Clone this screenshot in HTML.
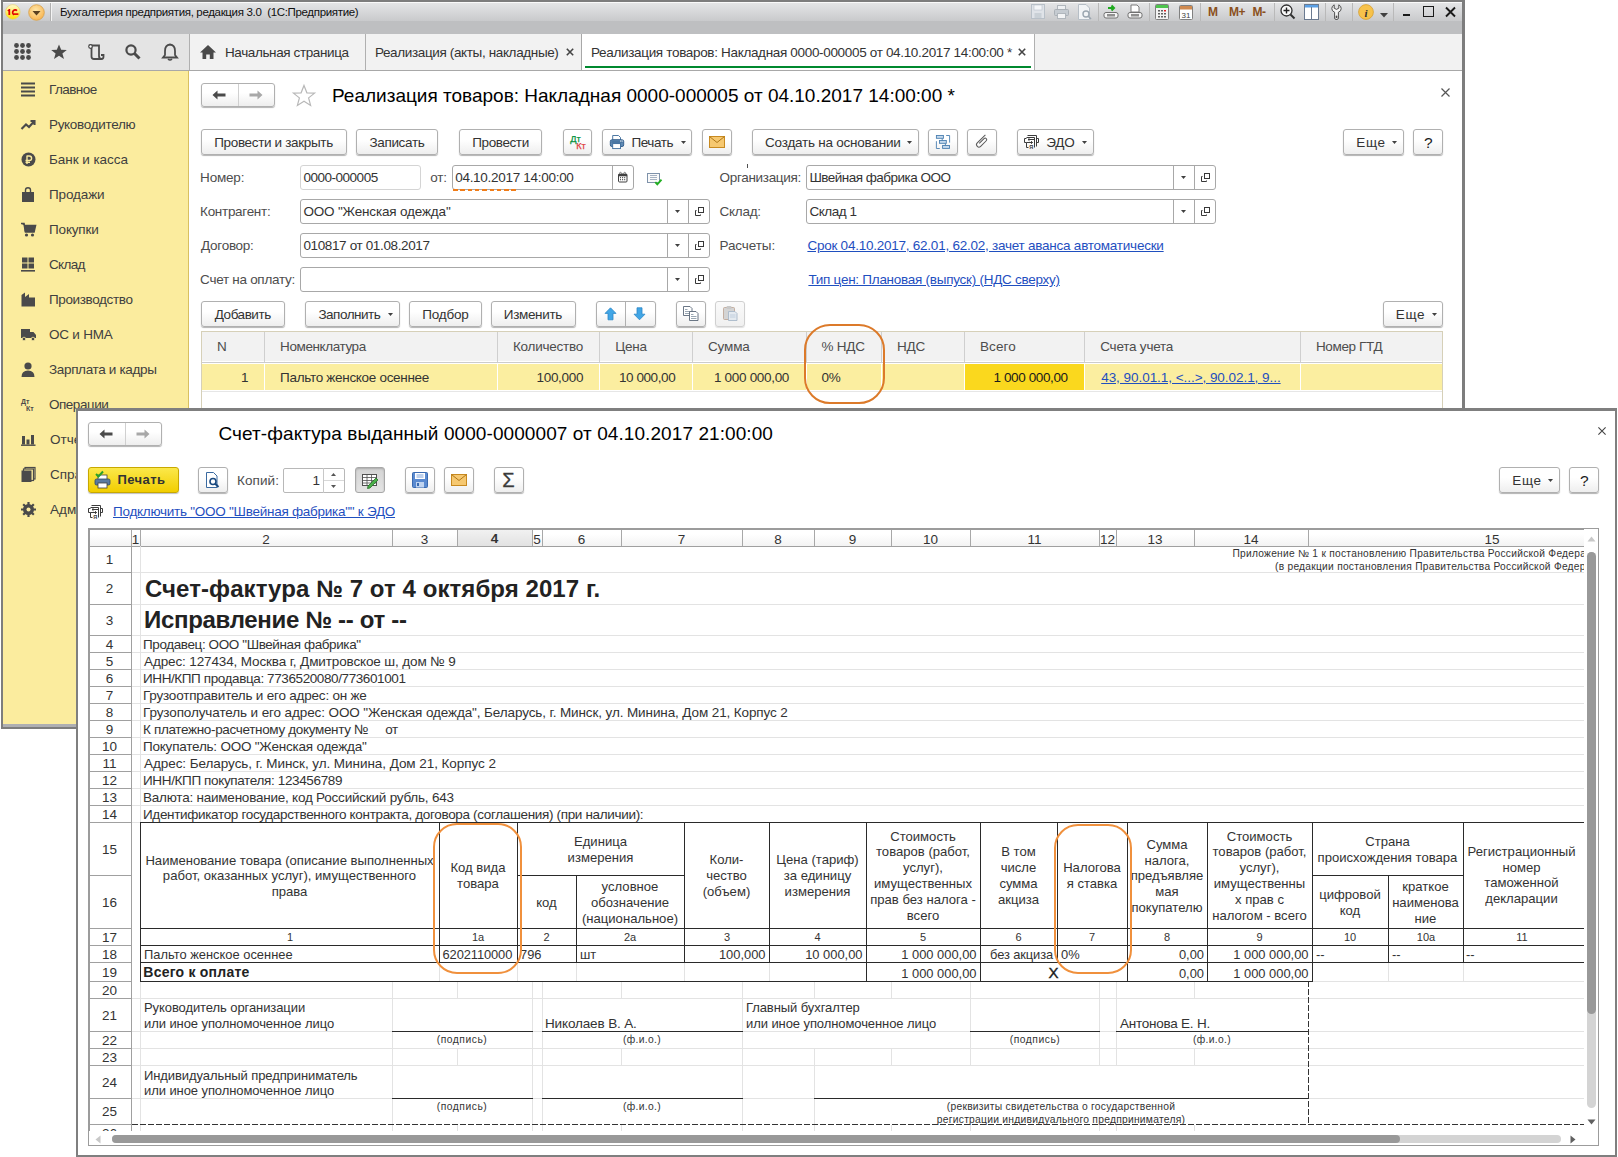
<!DOCTYPE html>
<html><head><meta charset="utf-8"><style>
html,body{margin:0;padding:0;}
body{width:1618px;height:1157px;position:relative;overflow:hidden;background:#ffffff;font-family:"Liberation Sans",sans-serif;}
.b{position:absolute;}
.t{position:absolute;white-space:nowrap;font-family:"Liberation Sans",sans-serif;}
svg{overflow:visible;}
</style></head><body>
<div class="b" style="left:1px;top:0px;width:1464px;height:729px;background:#7d7d7d;"></div>
<div class="b" style="left:3px;top:2px;width:1459px;height:725px;background:#ffffff;"></div>
<div class="b" style="left:3px;top:2px;width:1459px;height:1px;background:#fafafa;"></div>
<div class="b" style="left:3px;top:3px;width:1459px;height:18px;background:linear-gradient(#e4e5e6,#c9cacc);"></div>
<div class="b" style="left:3px;top:21px;width:1459px;height:13px;background:#bebfc1;"></div>
<svg class="b" style="left:5px;top:4px;" width="17" height="17" viewBox="0 0 17 17"><defs><linearGradient id="lg" x1="0" y1="0" x2="0" y2="1"><stop offset="0" stop-color="#fffbd0"/><stop offset="1" stop-color="#ffe000"/></linearGradient></defs><circle cx="7.8" cy="7.9" r="7.3" fill="url(#lg)" stroke="#e8d060" stroke-width="0.6"/><path d="M2.2 6.8 L4 5 H5.2 V10.9 H3.4 V7.2 Z" fill="#e00000"/><path d="M12 6.6 A2.6 2.6 0 1 0 9 10.8" fill="none" stroke="#e00000" stroke-width="1.7"/><rect x="8.6" y="9.3" width="4.8" height="1.6" fill="#e00000"/></svg>
<svg class="b" style="left:28px;top:4px;" width="17" height="17" viewBox="0 0 17 17"><defs><radialGradient id="lg2" cx="45%" cy="35%" r="70%"><stop offset="0" stop-color="#ffe7a8"/><stop offset="1" stop-color="#f7b04a"/></radialGradient></defs><circle cx="8.5" cy="8.5" r="7.8" fill="url(#lg2)" stroke="#d6a04a" stroke-width="0.8"/><path d="M4.5 7 L12.5 7 L8.5 11.5 Z" fill="#5a4020"/></svg>
<div class="b" style="left:50px;top:3px;width:1px;height:18px;background:#b0b0b0;"></div>
<div class="b" style="left:51px;top:3px;width:1px;height:18px;background:#f4f4f4;"></div>
<div class="t" style="top:3.50px;height:17px;line-height:17px;font-size:11.5px;color:#101010;letter-spacing:-0.333px;left:60px;white-space:pre;">Бухгалтерия предприятия, редакция 3.0  (1С:Предприятие)</div>
<svg class="b" style="left:1031px;top:4px;" width="14" height="15" viewBox="0 0 14 15"><rect x="0.5" y="0.5" width="13" height="14" fill="#dfe3e8" stroke="#b8c0c8"/><rect x="3" y="1" width="8" height="5" fill="#f4f6f8" stroke="#b8c0c8" stroke-width="0.6"/><rect x="3.5" y="9" width="7" height="5" fill="#c9d0d6"/></svg>
<svg class="b" style="left:1054px;top:5px;" width="15" height="14" viewBox="0 0 15 14"><rect x="3.5" y="0.5" width="8" height="4" fill="#eef0f2" stroke="#b0b6bc"/><rect x="0.5" y="4.5" width="14" height="6" rx="1" fill="#c5cbd1" stroke="#aab0b6"/><rect x="3.5" y="8.5" width="8" height="5" fill="#f3f4f5" stroke="#b0b6bc"/></svg>
<svg class="b" style="left:1078px;top:4px;" width="15" height="16" viewBox="0 0 15 16"><path d="M0.5 0.5 H8 L11.5 4 V15.5 H0.5 Z" fill="#f2f4f6" stroke="#b6bec6"/><circle cx="8" cy="10" r="3" fill="none" stroke="#9ba6b0" stroke-width="1.4"/><path d="M10 12 L13 15" stroke="#9ba6b0" stroke-width="1.6"/></svg>
<div class="b" style="left:1098px;top:3px;width:1px;height:18px;background:#b9b9b9;"></div>
<svg class="b" style="left:1103px;top:4px;" width="16" height="15" viewBox="0 0 16 15"><path d="M5 4 H11 M8.5 1.5 L11 4 L8.5 6.5" stroke="#1faa1f" stroke-width="2" fill="none"/><rect x="1" y="8.5" width="14" height="5.5" rx="2" fill="#f5f5f5" stroke="#707070"/><rect x="4" y="10" width="8" height="2.5" fill="#909090"/></svg>
<svg class="b" style="left:1127px;top:4px;" width="16" height="15" viewBox="0 0 16 15"><path d="M4 1 H10 L12 3 V8 H4 Z" fill="#fff" stroke="#707070" stroke-width="0.9"/><rect x="1" y="8.5" width="14" height="5.5" rx="2" fill="#f5f5f5" stroke="#707070"/><rect x="4" y="10" width="8" height="2.5" fill="#909090"/></svg>
<div class="b" style="left:1149px;top:3px;width:1px;height:18px;background:#b9b9b9;"></div>
<svg class="b" style="left:1155px;top:4px;" width="14" height="16" viewBox="0 0 14 16"><rect x="0.5" y="0.5" width="13" height="15" rx="1" fill="#f3f3f3" stroke="#808080"/><rect x="1" y="1" width="12" height="3" fill="#4ec44e"/><g fill="#606060"><rect x="3" y="6" width="2" height="1.5"/><rect x="6" y="6" width="2" height="1.5"/><rect x="9" y="6" width="2" height="1.5" fill="#e02020"/><rect x="3" y="9" width="2" height="1.5"/><rect x="6" y="9" width="2" height="1.5"/><rect x="9" y="9" width="2" height="1.5"/><rect x="3" y="12" width="2" height="1.5"/><rect x="6" y="12" width="2" height="1.5"/><rect x="9" y="12" width="2" height="1.5"/></g></svg>
<svg class="b" style="left:1179px;top:4px;" width="14" height="16" viewBox="0 0 14 16"><rect x="0.5" y="1.5" width="13" height="14" rx="1" fill="#fff" stroke="#808080"/><rect x="1" y="2" width="12" height="3.5" fill="#d08a50"/><text x="7" y="13.5" font-size="8" text-anchor="middle" fill="#404040" font-family="Liberation Sans">31</text></svg>
<div class="b" style="left:1200px;top:3px;width:1px;height:18px;background:#b9b9b9;"></div>
<div class="t" style="top:3.00px;height:18px;line-height:18px;font-size:12px;color:#8a5020;font-weight:bold;left:463px;width:1500px;text-align:center;">M</div>
<div class="t" style="top:3.00px;height:18px;line-height:18px;font-size:12px;color:#8a5020;font-weight:bold;letter-spacing:-0.5px;left:487px;width:1500px;text-align:center;">M+</div>
<div class="t" style="top:3.00px;height:18px;line-height:18px;font-size:12px;color:#8a5020;font-weight:bold;letter-spacing:-0.5px;left:509px;width:1500px;text-align:center;">M-</div>
<div class="b" style="left:1274px;top:3px;width:1px;height:18px;background:#b9b9b9;"></div>
<svg class="b" style="left:1280px;top:4px;" width="16" height="16" viewBox="0 0 16 16"><circle cx="6.5" cy="6.5" r="5.5" fill="#fafafa" stroke="#303030" stroke-width="1.3"/><path d="M6.5 3.5 V9.5 M3.5 6.5 H9.5" stroke="#202020" stroke-width="1.4"/><path d="M10.5 10.5 L14.5 14.5" stroke="#303030" stroke-width="2"/></svg>
<svg class="b" style="left:1304px;top:4px;" width="15" height="16" viewBox="0 0 15 16"><rect x="0.5" y="0.5" width="14" height="15" fill="#fff" stroke="#6a7a90"/><rect x="1" y="1" width="13" height="2.5" fill="#5aa0e6"/><path d="M7.5 3 V15" stroke="#6a7a90"/></svg>
<div class="b" style="left:1325px;top:3px;width:1px;height:18px;background:#b9b9b9;"></div>
<svg class="b" style="left:1331px;top:4px;" width="12" height="16" viewBox="0 0 12 16"><path d="M3.2 0.8 Q0.8 2 0.8 4.6 Q0.8 7.2 3.6 8.2 V14 Q3.6 15.4 5 15.4 H6 Q7.4 15.4 7.4 14 V8.2 Q10.2 7.2 10.2 4.6 Q10.2 2 7.8 0.8 V4.2 L5.5 5.4 L3.2 4.2 Z" fill="#f4f4f4" stroke="#505050" stroke-width="1"/><rect x="4.6" y="11.5" width="1.8" height="2.6" rx="0.9" fill="#505050"/></svg>
<div class="b" style="left:1352px;top:3px;width:1px;height:18px;background:#b9b9b9;"></div>
<svg class="b" style="left:1358px;top:4px;" width="16" height="16" viewBox="0 0 16 16"><circle cx="8" cy="8" r="7.4" fill="#f7c24a" stroke="#d6a032" stroke-width="0.8"/><text x="8" y="12.5" font-size="11" font-style="italic" font-weight="bold" text-anchor="middle" fill="#303030" font-family="Liberation Serif">i</text></svg>
<svg class="b" style="left:1380px;top:13px;" width="8" height="5" viewBox="0 0 8 5"><path d="M0 0 H8 L4 4.5 Z" fill="#404040"/></svg>
<div class="b" style="left:1393px;top:3px;width:1px;height:18px;background:#b9b9b9;"></div>
<div class="b" style="left:1403px;top:13.5px;width:7px;height:2.5px;background:#1a1a1a;"></div>
<div class="b" style="left:1423px;top:6px;width:11px;height:11px;border:1.6px solid #1a1a1a;box-sizing:border-box;"></div>
<svg class="b" style="left:1445px;top:6px;" width="11" height="11" viewBox="0 0 11 11"><path d="M1 1.5 L10 10.5 M10 1.5 L1 10.5" stroke="#1a1a1a" stroke-width="1.9"/></svg>
<div class="b" style="left:3px;top:34px;width:1459px;height:36px;background:#f2f2f2;"></div>
<div class="b" style="left:3px;top:34px;width:186px;height:36px;background:#e4e4e4;"></div>
<div class="b" style="left:3px;top:70px;width:1459px;height:1px;background:#a8a8a8;"></div>
<div class="b" style="left:189px;top:34px;width:1px;height:36px;background:#b0b0b0;"></div>
<svg class="b" style="left:14px;top:43px;" width="17" height="17" viewBox="0 0 17 17"><circle cx="2.5" cy="2.5" r="2.4" fill="#4a4a4a"/><circle cx="2.5" cy="8.5" r="2.4" fill="#4a4a4a"/><circle cx="2.5" cy="14.5" r="2.4" fill="#4a4a4a"/><circle cx="8.5" cy="2.5" r="2.4" fill="#4a4a4a"/><circle cx="8.5" cy="8.5" r="2.4" fill="#4a4a4a"/><circle cx="8.5" cy="14.5" r="2.4" fill="#4a4a4a"/><circle cx="14.5" cy="2.5" r="2.4" fill="#4a4a4a"/><circle cx="14.5" cy="8.5" r="2.4" fill="#4a4a4a"/><circle cx="14.5" cy="14.5" r="2.4" fill="#4a4a4a"/></svg>
<svg class="b" style="left:51px;top:44px;" width="16" height="16" viewBox="0 0 16 16"><path d="M8 0.5 L10.2 5.8 L15.8 5.9 L11.4 9.4 L13 15 L8 11.8 L3 15 L4.6 9.4 L0.2 5.9 L5.8 5.8 Z" fill="#4a4a4a"/></svg>
<svg class="b" style="left:88px;top:44px;" width="16" height="16" viewBox="0 0 16 16"><path d="M1.5 1.5 H11 V12 Q11 15 13.5 15 Q15.5 15 15.5 12.5 V11 H13 M3.5 2 V12.5 Q3.5 15 6 15 H13.5" fill="none" stroke="#4a4a4a" stroke-width="1.8"/><circle cx="2.5" cy="2.5" r="1.8" fill="#fff" stroke="#4a4a4a" stroke-width="1.2"/></svg>
<svg class="b" style="left:125px;top:44px;" width="16" height="16" viewBox="0 0 16 16"><circle cx="6" cy="6" r="4.6" fill="none" stroke="#4a4a4a" stroke-width="2.2"/><path d="M9.5 9.5 L14.5 14.5" stroke="#4a4a4a" stroke-width="3"/></svg>
<svg class="b" style="left:162px;top:43px;" width="16" height="18" viewBox="0 0 16 18"><path d="M8 1.5 Q13 2 13 8 V12 L15 14.5 H1 L3 12 V8 Q3 2 8 1.5 Z" fill="none" stroke="#4a4a4a" stroke-width="1.8"/><path d="M6 16 Q8 18 10 16" stroke="#4a4a4a" stroke-width="1.6" fill="none"/></svg>
<svg class="b" style="left:200px;top:45px;" width="16" height="14" viewBox="0 0 16 14"><path d="M8 0 L16 7.5 H13.5 V14 H9.8 V9.5 H6.2 V14 H2.5 V7.5 H0 Z" fill="#4a4a4a"/></svg>
<div class="t" style="top:42.50px;height:20px;line-height:20px;font-size:13.5px;color:#333333;letter-spacing:-0.388px;left:225px;">Начальная страница</div>
<div class="b" style="left:365px;top:34px;width:1px;height:36px;background:#b0b0b0;"></div>
<div class="t" style="top:42.50px;height:20px;line-height:20px;font-size:13.5px;color:#333333;letter-spacing:-0.363px;left:374.9px;">Реализация (акты, накладные)</div>
<svg class="b" style="left:566px;top:48px;" width="8" height="8" viewBox="0 0 8 8"><path d="M0.8 0.8 L7.2 7.2 M7.2 0.8 L0.8 7.2" stroke="#444" stroke-width="1.6"/></svg>
<div class="b" style="left:582px;top:34px;width:452px;height:36px;background:#ffffff;"></div>
<div class="b" style="left:581px;top:34px;width:1px;height:36px;background:#a8a8a8;"></div>
<div class="b" style="left:1034px;top:34px;width:1px;height:36px;background:#b0b0b0;"></div>
<div class="b" style="left:585px;top:66px;width:446px;height:2px;background:#00892f;"></div>
<div class="t" style="top:42.50px;height:20px;line-height:20px;font-size:13.5px;color:#333333;letter-spacing:-0.329px;left:591px;">Реализация товаров: Накладная 0000-000005 от 04.10.2017 14:00:00 *</div>
<svg class="b" style="left:1018px;top:48px;" width="8" height="8" viewBox="0 0 8 8"><path d="M0.8 0.8 L7.2 7.2 M7.2 0.8 L0.8 7.2" stroke="#444" stroke-width="1.6"/></svg>
<div class="b" style="left:3px;top:71px;width:185px;height:653px;background:#fbec9e;"></div>
<div class="b" style="left:3px;top:724px;width:1459px;height:3px;background:#aeafb2;"></div>
<div class="b" style="left:188px;top:71px;width:1px;height:654px;background:#d9c060;"></div>
<div class="t" style="top:79.50px;height:20px;line-height:20px;font-size:13.5px;color:#404040;letter-spacing:-0.567px;left:49px;">Главное</div>
<div class="t" style="top:114.50px;height:20px;line-height:20px;font-size:13.5px;color:#404040;letter-spacing:-0.318px;left:49px;">Руководителю</div>
<div class="t" style="top:149.50px;height:20px;line-height:20px;font-size:13.5px;color:#404040;letter-spacing:-0.055px;left:49px;">Банк и касса</div>
<div class="t" style="top:184.50px;height:20px;line-height:20px;font-size:13.5px;color:#404040;letter-spacing:-0.133px;left:49px;">Продажи</div>
<div class="t" style="top:219.50px;height:20px;line-height:20px;font-size:13.5px;color:#404040;letter-spacing:-0.167px;left:49px;">Покупки</div>
<div class="t" style="top:254.50px;height:20px;line-height:20px;font-size:13.5px;color:#404040;letter-spacing:-0.65px;left:49px;">Склад</div>
<div class="t" style="top:289.50px;height:20px;line-height:20px;font-size:13.5px;color:#404040;letter-spacing:-0.373px;left:49px;">Производство</div>
<div class="t" style="top:324.50px;height:20px;line-height:20px;font-size:13.5px;color:#404040;letter-spacing:-0.229px;left:49px;">ОС и НМА</div>
<div class="t" style="top:359.50px;height:20px;line-height:20px;font-size:13.5px;color:#404040;letter-spacing:-0.34px;left:49px;">Зарплата и кадры</div>
<div class="t" style="top:394.50px;height:20px;line-height:20px;font-size:13.5px;color:#404040;letter-spacing:-0.486px;left:49px;">Операции</div>
<div class="t" style="top:429.50px;height:20px;line-height:20px;font-size:13.5px;color:#404040;left:50px;">Отчеты</div>
<div class="t" style="top:464.50px;height:20px;line-height:20px;font-size:13.5px;color:#404040;left:50px;">Справочники</div>
<div class="t" style="top:499.50px;height:20px;line-height:20px;font-size:13.5px;color:#404040;left:50px;">Администрирование</div>
<svg class="b" style="left:21px;top:82px;" width="16" height="16" viewBox="0 0 16 16"><path d="M0 1.5 H14 M0 5.5 H14 M0 9.5 H14 M0 13.5 H14" stroke="#4a4a4a" stroke-width="2"/></svg>
<svg class="b" style="left:21px;top:117px;" width="16" height="16" viewBox="0 0 16 16"><path d="M0.5 12 L5 7.5 L8 10 L13 4.5 M9.5 4 H13.5 V8" fill="none" stroke="#4a4a4a" stroke-width="2.1"/></svg>
<svg class="b" style="left:21px;top:152px;" width="16" height="16" viewBox="0 0 16 16"><circle cx="7.5" cy="7.5" r="7" fill="#4a4a4a"/><path d="M6 3.5 V12 M6 4 H8.3 Q10.6 4 10.6 6.2 Q10.6 8.4 8.3 8.4 H4.5 M4.5 10.3 H9" stroke="#fbec9e" stroke-width="1.4" fill="none"/></svg>
<svg class="b" style="left:21px;top:187px;" width="16" height="16" viewBox="0 0 16 16"><rect x="1" y="5" width="12" height="10" fill="#4a4a4a"/><path d="M4.5 6 V3 Q4.5 0.8 7 0.8 Q9.5 0.8 9.5 3 V6" fill="none" stroke="#4a4a4a" stroke-width="1.4"/></svg>
<svg class="b" style="left:21px;top:222px;" width="16" height="16" viewBox="0 0 16 16"><path d="M0 1.5 H3 L4.5 10 H13 L14.5 3.5 H3.5" fill="#4a4a4a" stroke="#4a4a4a" stroke-width="1.6"/><rect x="3.5" y="3.5" width="10.5" height="6" fill="#4a4a4a"/><circle cx="5.5" cy="13" r="1.6" fill="#4a4a4a"/><circle cx="11.5" cy="13" r="1.6" fill="#4a4a4a"/></svg>
<svg class="b" style="left:21px;top:257px;" width="16" height="16" viewBox="0 0 16 16"><rect x="1" y="0.5" width="5.5" height="5" fill="#4a4a4a"/><rect x="7.5" y="0.5" width="5.5" height="5" fill="#4a4a4a"/><rect x="1" y="6.5" width="5.5" height="5" fill="#4a4a4a"/><rect x="7.5" y="6.5" width="5.5" height="5" fill="#4a4a4a"/><rect x="0" y="13" width="14" height="1.6" fill="#4a4a4a"/></svg>
<svg class="b" style="left:21px;top:292px;" width="16" height="16" viewBox="0 0 16 16"><path d="M0.5 14.5 V3 L4 0.5 V5 L8 2 V5.5 L14 5.5 V14.5 Z" fill="#4a4a4a"/></svg>
<svg class="b" style="left:21px;top:327px;" width="16" height="16" viewBox="0 0 16 16"><path d="M0 2 H9 V11 H0 Z M9 5 H12.5 L15 8 V11 H9 Z" fill="#4a4a4a"/><circle cx="3" cy="12" r="1.8" fill="#4a4a4a" stroke="#fbec9e" stroke-width="0.8"/><circle cx="12" cy="12" r="1.8" fill="#4a4a4a" stroke="#fbec9e" stroke-width="0.8"/></svg>
<svg class="b" style="left:21px;top:362px;" width="16" height="16" viewBox="0 0 16 16"><circle cx="7" cy="4" r="3.6" fill="#4a4a4a"/><path d="M0.5 15 Q0.5 8.5 7 8.5 Q13.5 8.5 13.5 15 Z" fill="#4a4a4a"/></svg>
<svg class="b" style="left:21px;top:397px;" width="16" height="16" viewBox="0 0 16 16"><text x="0" y="6.5" font-size="7" fill="#4a4a4a" font-family="Liberation Sans" font-weight="bold">Дт</text><text x="5" y="14" font-size="7" fill="#4a4a4a" font-family="Liberation Sans" font-weight="bold">Кт</text></svg>
<svg class="b" style="left:21px;top:432px;" width="16" height="16" viewBox="0 0 16 16"><rect x="1" y="4" width="3" height="8.5" fill="#4a4a4a"/><rect x="5.5" y="7.5" width="3" height="5" fill="#4a4a4a"/><rect x="10" y="3" width="3" height="9.5" fill="#4a4a4a"/><rect x="0" y="12.5" width="14.5" height="1.4" fill="#4a4a4a"/></svg>
<svg class="b" style="left:21px;top:467px;" width="16" height="16" viewBox="0 0 16 16"><rect x="4" y="0.5" width="10" height="11.5" fill="none" stroke="#4a4a4a" stroke-width="1.2"/><rect x="2.5" y="2" width="10" height="11.5" fill="#fbec9e" stroke="#4a4a4a" stroke-width="1.2"/><rect x="0.5" y="3.5" width="10" height="11.5" fill="#4a4a4a"/></svg>
<svg class="b" style="left:21px;top:502px;" width="16" height="16" viewBox="0 0 16 16"><circle cx="7.5" cy="7.5" r="4" fill="none" stroke="#4a4a4a" stroke-width="3"/><path d="M7.5 0 V15 M0 7.5 H15 M2.2 2.2 L12.8 12.8 M12.8 2.2 L2.2 12.8" stroke="#4a4a4a" stroke-width="2.2"/><circle cx="7.5" cy="7.5" r="2" fill="#fbec9e"/></svg>
<div class="b" style="left:201px;top:83px;width:74px;height:24px;border:1px solid #b0b0b0;border-radius:3px;background:linear-gradient(#ffffff 40%,#eeeeee);box-shadow:0 1px 1px rgba(0,0,0,0.3);box-sizing:border-box;"></div>
<div class="b" style="left:238px;top:84px;width:1px;height:22px;background:#d0d0d0;"></div>
<svg class="b" style="left:212px;top:90px;" width="14" height="10" viewBox="0 0 14 10"><path d="M0.5 5 L5.5 0.5 V3.5 H13.5 V6.5 H5.5 V9.5 Z" fill="#4a4a4a"/></svg>
<svg class="b" style="left:249px;top:90px;" width="14" height="10" viewBox="0 0 14 10"><path d="M13.5 5 L8.5 0.5 V3.5 H0.5 V6.5 H8.5 V9.5 Z" fill="#a8a8a8"/></svg>
<svg class="b" style="left:292px;top:84px;" width="24" height="24" viewBox="0 0 24 24"><path d="M12 1.5 L14.9 8.8 L22.6 9.1 L16.6 13.9 L18.6 21.4 L12 17.2 L5.4 21.4 L7.4 13.9 L1.4 9.1 L9.1 8.8 Z" fill="none" stroke="#b8b8b8" stroke-width="1.2"/></svg>
<div class="t" style="top:82.00px;height:28px;line-height:28px;font-size:19px;color:#000000;left:332px;">Реализация товаров: Накладная 0000-000005 от 04.10.2017 14:00:00 *</div>
<svg class="b" style="left:1441px;top:88px;" width="9" height="9" viewBox="0 0 9 9"><path d="M0.5 0.5 L8.5 8.5 M8.5 0.5 L0.5 8.5" stroke="#555" stroke-width="1.2"/></svg>
<div class="b" style="left:201px;top:129px;width:146px;height:26px;border:1px solid #b0b0b0;border-radius:3px;background:linear-gradient(#ffffff 40%,#eeeeee);box-shadow:0 1px 1px rgba(0,0,0,0.3);box-sizing:border-box;"></div>
<div class="t" style="top:132.50px;height:20px;line-height:20px;font-size:13.5px;color:#333;letter-spacing:-0.341px;left:214.2px;">Провести и закрыть</div>
<div class="b" style="left:356px;top:129px;width:82px;height:26px;border:1px solid #b0b0b0;border-radius:3px;background:linear-gradient(#ffffff 40%,#eeeeee);box-shadow:0 1px 1px rgba(0,0,0,0.3);box-sizing:border-box;"></div>
<div class="t" style="top:132.50px;height:20px;line-height:20px;font-size:13.5px;color:#333;letter-spacing:-0.329px;left:369.4px;">Записать</div>
<div class="b" style="left:459px;top:129px;width:83px;height:26px;border:1px solid #b0b0b0;border-radius:3px;background:linear-gradient(#ffffff 40%,#eeeeee);box-shadow:0 1px 1px rgba(0,0,0,0.3);box-sizing:border-box;"></div>
<div class="t" style="top:132.50px;height:20px;line-height:20px;font-size:13.5px;color:#333;letter-spacing:-0.386px;left:472.2px;">Провести</div>
<div class="b" style="left:563px;top:129px;width:29px;height:26px;border:1px solid #b0b0b0;border-radius:3px;background:linear-gradient(#ffffff 40%,#eeeeee);box-shadow:0 1px 1px rgba(0,0,0,0.3);box-sizing:border-box;"></div>
<div class="t" style="top:131.80px;height:14px;line-height:14px;font-size:9.2px;color:#00913a;left:-174.5px;width:1500px;text-align:center;-webkit-text-stroke:0.25px #00913a;">Дт</div>
<div class="t" style="top:139.30px;height:14px;line-height:14px;font-size:9.2px;color:#e04040;left:-169px;width:1500px;text-align:center;-webkit-text-stroke:0.25px #e04040;">Кт</div>
<div class="b" style="left:602px;top:129px;width:90px;height:26px;border:1px solid #b0b0b0;border-radius:3px;background:linear-gradient(#ffffff 40%,#eeeeee);box-shadow:0 1px 1px rgba(0,0,0,0.3);box-sizing:border-box;"></div>
<svg class="b" style="left:609px;top:134px;" width="16" height="16" viewBox="0 0 16 16"><path d="M3.7 1.5 H9.5 L11.5 3.5 V6 H3.7 Z" fill="#fff" stroke="#3a6a9a" stroke-width="0.9"/><rect x="1.3" y="5.8" width="13.4" height="6.7" rx="1.6" fill="#5f8ab5" stroke="#2f5a88" stroke-width="0.9"/><path d="M2.5 8 H13.5" stroke="#2f5a88" stroke-width="0.8"/><rect x="11" y="6.6" width="1.2" height="0.9" fill="#fff"/><rect x="12.6" y="6.6" width="1.2" height="0.9" fill="#fff"/><rect x="3.7" y="9.6" width="7.8" height="5" fill="#fff" stroke="#3a6a9a" stroke-width="0.9"/></svg>
<div class="t" style="top:132.50px;height:20px;line-height:20px;font-size:13.5px;color:#333;letter-spacing:-0.4px;left:631.4px;">Печать</div>
<svg class="b" style="left:681px;top:141.0px;" width="5" height="3" viewBox="0 0 5 3"><path d="M0 0 H5 L2.5 3 Z" fill="#404040"/></svg>
<div class="b" style="left:702px;top:129px;width:30px;height:26px;border:1px solid #b0b0b0;border-radius:3px;background:linear-gradient(#ffffff 40%,#eeeeee);box-shadow:0 1px 1px rgba(0,0,0,0.3);box-sizing:border-box;"></div>
<svg class="b" style="left:709px;top:136px;" width="16" height="12" viewBox="0 0 16 12"><rect x="0.5" y="0.5" width="15" height="11" fill="#f6c870" stroke="#c88a20"/><path d="M0.5 0.5 L8 6.5 L15.5 0.5" fill="none" stroke="#b07818" stroke-width="1"/></svg>
<div class="b" style="left:747px;top:164px;width:1px;height:4px;background:#505050;"></div>
<div class="b" style="left:752px;top:129px;width:167px;height:26px;border:1px solid #b0b0b0;border-radius:3px;background:linear-gradient(#ffffff 40%,#eeeeee);box-shadow:0 1px 1px rgba(0,0,0,0.3);box-sizing:border-box;"></div>
<div class="t" style="top:132.50px;height:20px;line-height:20px;font-size:13.5px;color:#333;letter-spacing:-0.232px;left:765.1px;">Создать на основании</div>
<svg class="b" style="left:907px;top:140.5px;" width="5" height="3" viewBox="0 0 5 3"><path d="M0 0 H5 L2.5 3 Z" fill="#404040"/></svg>
<div class="b" style="left:928px;top:129px;width:30px;height:26px;border:1px solid #b0b0b0;border-radius:3px;background:linear-gradient(#ffffff 40%,#eeeeee);box-shadow:0 1px 1px rgba(0,0,0,0.3);box-sizing:border-box;"></div>
<svg class="b" style="left:928px;top:128px;" width="30" height="28" viewBox="0 0 30 28"><g fill="#c6daee" stroke="#4a7fb0" stroke-width="0.9"><rect x="8.4" y="7.5" width="7" height="2.8"/><rect x="11.5" y="12.5" width="6.8" height="2.8"/><rect x="14.6" y="17.5" width="6.9" height="2.9"/></g><path d="M14.2 10.5 V12.3 M17.4 15.5 V17.3 M18.2 7.5 H21.6 V14.6 M8.4 13.2 V20.5 H11.8" fill="none" stroke="#4a7fb0" stroke-width="0.9"/></svg>
<div class="b" style="left:967px;top:129px;width:30px;height:26px;border:1px solid #b0b0b0;border-radius:3px;background:linear-gradient(#ffffff 40%,#eeeeee);box-shadow:0 1px 1px rgba(0,0,0,0.3);box-sizing:border-box;"></div>
<svg class="b" style="left:974px;top:134px;" width="16" height="16" viewBox="0 0 16 16"><g transform="translate(8 7.6) rotate(45)"><path d="M -2.4 -7.2 V 4.3 A 2.4 2.4 0 0 0 2.4 4.3 V -3.6 A 1.55 1.55 0 0 0 -0.7 -3.6 V 3.2" fill="none" stroke="#5a5a5a" stroke-width="1.05"/></g></svg>
<div class="b" style="left:1017px;top:129px;width:77px;height:26px;border:1px solid #b0b0b0;border-radius:3px;background:linear-gradient(#ffffff 40%,#eeeeee);box-shadow:0 1px 1px rgba(0,0,0,0.3);box-sizing:border-box;"></div>
<svg class="b" style="left:1022px;top:133px;" width="18" height="17" viewBox="0 0 18 17"><g fill="none" stroke="#3c3c3c" stroke-width="1"><path d="M5.5 2.5 H14.5 V13.5"/><path d="M4.5 4.5 H12.5 V14.5"/><path d="M4.5 5.5 H2.5 V9.5 H4.5"/><path d="M14.5 5.5 H16.5 V9.5 H14.5"/><path d="M6 6.5 H12 M6 6.5 L7.5 5.2 M6 6.5 L7.5 7.8"/><path d="M4.5 9.5 H10.5 M10.5 9.5 L9 8.2 M10.5 9.5 L9 10.8"/><path d="M4.5 9.5 V14.5 H6.5"/></g><text x="7.3" y="16.3" font-size="5.5" fill="#3c3c3c" font-family="Liberation Sans" font-weight="bold">Я</text></svg>
<div class="t" style="top:132.50px;height:20px;line-height:20px;font-size:13.5px;color:#333;letter-spacing:-0.15px;left:1046.2px;">ЭДО</div>
<svg class="b" style="left:1082px;top:140.5px;" width="5" height="3" viewBox="0 0 5 3"><path d="M0 0 H5 L2.5 3 Z" fill="#404040"/></svg>
<div class="b" style="left:1343px;top:129px;width:61px;height:26px;border:1px solid #b0b0b0;border-radius:3px;background:linear-gradient(#ffffff 40%,#eeeeee);box-shadow:0 1px 1px rgba(0,0,0,0.3);box-sizing:border-box;"></div>
<div class="t" style="top:132.50px;height:20px;line-height:20px;font-size:13.5px;color:#333;letter-spacing:0.6px;left:1356.3px;">Еще</div>
<svg class="b" style="left:1392px;top:141.0px;" width="5" height="3" viewBox="0 0 5 3"><path d="M0 0 H5 L2.5 3 Z" fill="#404040"/></svg>
<div class="b" style="left:1413px;top:129px;width:30px;height:26px;border:1px solid #b0b0b0;border-radius:3px;background:linear-gradient(#ffffff 40%,#eeeeee);box-shadow:0 1px 1px rgba(0,0,0,0.3);box-sizing:border-box;"></div>
<div class="t" style="top:131.00px;height:23px;line-height:23px;font-size:15.5px;color:#1a1a1a;left:678.4000000000001px;width:1500px;text-align:center;">?</div>
<div class="t" style="top:168.00px;height:20px;line-height:20px;font-size:13.5px;color:#4d4d4d;letter-spacing:-0.2px;left:200.1px;">Номер:</div>
<div class="b" style="left:300px;top:165px;width:121px;height:25px;border:1px solid #d4d4d4;border-radius:3px;background:#fff;box-sizing:border-box;"></div>
<div class="t" style="top:168.00px;height:20px;line-height:20px;font-size:13.5px;color:#333333;letter-spacing:-0.48px;left:303.4px;">0000-000005</div>
<div class="t" style="top:168.00px;height:20px;line-height:20px;font-size:13.5px;color:#4d4d4d;letter-spacing:-0.15px;left:430.2px;">от:</div>
<div class="b" style="left:452px;top:165px;width:182px;height:25px;border:1px solid #a8a8a8;border-radius:3px;background:#fff;box-sizing:border-box;"></div>
<div class="t" style="top:168.00px;height:20px;line-height:20px;font-size:13.5px;color:#333333;letter-spacing:-0.289px;left:455.2px;">04.10.2017 14:00:00</div>
<div class="b" style="left:612px;top:165px;width:1px;height:25px;background:#a8a8a8;"></div>
<svg class="b" style="left:618px;top:172px;" width="10" height="11" viewBox="0 0 10 11"><rect x="0.5" y="2" width="8.5" height="8" rx="1" fill="#fff" stroke="#404040" stroke-width="1"/><rect x="0.5" y="2" width="8.5" height="2.3" fill="#404040"/><circle cx="2.5" cy="1.2" r="0.9" fill="#fff" stroke="#404040" stroke-width="0.6"/><circle cx="6.7" cy="1.2" r="0.9" fill="#fff" stroke="#404040" stroke-width="0.6"/><g fill="#404040"><circle cx="2.5" cy="5.7" r="0.6"/><circle cx="4.6" cy="5.7" r="0.6"/><circle cx="6.7" cy="5.7" r="0.6"/><circle cx="2.5" cy="7.7" r="0.6"/><circle cx="4.6" cy="7.7" r="0.6"/><circle cx="6.7" cy="7.7" r="0.6"/></g></svg>
<div class="b" style="left:453.0px;top:189px;width:4.5px;height:2px;background:#f07d1a;"></div>
<div class="b" style="left:460.3px;top:189px;width:4.5px;height:2px;background:#f07d1a;"></div>
<div class="b" style="left:467.6px;top:189px;width:4.5px;height:2px;background:#f07d1a;"></div>
<div class="b" style="left:474.9px;top:189px;width:4.5px;height:2px;background:#f07d1a;"></div>
<div class="b" style="left:482.2px;top:189px;width:4.5px;height:2px;background:#f07d1a;"></div>
<div class="b" style="left:489.5px;top:189px;width:4.5px;height:2px;background:#f07d1a;"></div>
<div class="b" style="left:496.8px;top:189px;width:4.5px;height:2px;background:#f07d1a;"></div>
<div class="b" style="left:504.1px;top:189px;width:4.5px;height:2px;background:#f07d1a;"></div>
<div class="b" style="left:511.4px;top:189px;width:4.5px;height:2px;background:#f07d1a;"></div>
<svg class="b" style="left:646px;top:172px;" width="17" height="14" viewBox="0 0 17 14"><rect x="1.5" y="1.5" width="12" height="9" fill="#fafafa" stroke="#7e92aa" stroke-width="1"/><path d="M4 3.5 H11 M4 5.5 H11 M4 7.5 H11" stroke="#90a0b4" stroke-width="0.8"/><path d="M9.3 10.2 L11.3 12.4 L15.5 7.6" fill="none" stroke="#22b022" stroke-width="1.9"/></svg>
<div class="t" style="top:202.00px;height:20px;line-height:20px;font-size:13.5px;color:#4d4d4d;letter-spacing:-0.3px;left:200.1px;">Контрагент:</div>
<div class="b" style="left:300px;top:199px;width:410px;height:25px;border:1px solid #a8a8a8;border-radius:3px;background:#fff;box-sizing:border-box;"></div>
<div class="t" style="top:202.00px;height:20px;line-height:20px;font-size:13.5px;color:#333333;letter-spacing:-0.168px;left:303.4px;">ООО "Женская одежда"</div>
<div class="b" style="left:688px;top:199px;width:1px;height:25px;background:#a8a8a8;"></div>
<svg class="b" style="left:694px;top:206px;" width="10" height="10" viewBox="0 0 10 10"><rect x="4.5" y="1.5" width="5" height="5" fill="none" stroke="#383838" stroke-width="1"/><path d="M2.5 4.5 H1.5 V9.5 H6.5 V8.5" fill="none" stroke="#383838" stroke-width="1"/></svg>
<div class="b" style="left:667px;top:199px;width:1px;height:25px;background:#a8a8a8;"></div>
<svg class="b" style="left:675px;top:210.0px;" width="5" height="3" viewBox="0 0 5 3"><path d="M0 0 H5 L2.5 3 Z" fill="#404040"/></svg>
<div class="t" style="top:236.00px;height:20px;line-height:20px;font-size:13.5px;color:#4d4d4d;letter-spacing:-0.286px;left:201.1px;">Договор:</div>
<div class="b" style="left:300px;top:233px;width:410px;height:25px;border:1px solid #a8a8a8;border-radius:3px;background:#fff;box-sizing:border-box;"></div>
<div class="t" style="top:236.00px;height:20px;line-height:20px;font-size:13.5px;color:#333333;letter-spacing:-0.363px;left:303.4px;">010817 от 01.08.2017</div>
<div class="b" style="left:688px;top:233px;width:1px;height:25px;background:#a8a8a8;"></div>
<svg class="b" style="left:694px;top:240px;" width="10" height="10" viewBox="0 0 10 10"><rect x="4.5" y="1.5" width="5" height="5" fill="none" stroke="#383838" stroke-width="1"/><path d="M2.5 4.5 H1.5 V9.5 H6.5 V8.5" fill="none" stroke="#383838" stroke-width="1"/></svg>
<div class="b" style="left:667px;top:233px;width:1px;height:25px;background:#a8a8a8;"></div>
<svg class="b" style="left:675px;top:244.0px;" width="5" height="3" viewBox="0 0 5 3"><path d="M0 0 H5 L2.5 3 Z" fill="#404040"/></svg>
<div class="t" style="top:270.00px;height:20px;line-height:20px;font-size:13.5px;color:#4d4d4d;letter-spacing:-0.286px;left:200.1px;">Счет на оплату:</div>
<div class="b" style="left:300px;top:267px;width:410px;height:25px;border:1px solid #a8a8a8;border-radius:3px;background:#fff;box-sizing:border-box;"></div>
<div class="b" style="left:688px;top:267px;width:1px;height:25px;background:#a8a8a8;"></div>
<svg class="b" style="left:694px;top:274px;" width="10" height="10" viewBox="0 0 10 10"><rect x="4.5" y="1.5" width="5" height="5" fill="none" stroke="#383838" stroke-width="1"/><path d="M2.5 4.5 H1.5 V9.5 H6.5 V8.5" fill="none" stroke="#383838" stroke-width="1"/></svg>
<div class="b" style="left:667px;top:267px;width:1px;height:25px;background:#a8a8a8;"></div>
<svg class="b" style="left:675px;top:278.0px;" width="5" height="3" viewBox="0 0 5 3"><path d="M0 0 H5 L2.5 3 Z" fill="#404040"/></svg>
<div class="t" style="top:168.00px;height:20px;line-height:20px;font-size:13.5px;color:#4d4d4d;letter-spacing:-0.309px;left:719.5px;">Организация:</div>
<div class="b" style="left:806px;top:165px;width:410px;height:25px;border:1px solid #a8a8a8;border-radius:3px;background:#fff;box-sizing:border-box;"></div>
<div class="t" style="top:168.00px;height:20px;line-height:20px;font-size:13.5px;color:#333333;letter-spacing:-0.511px;left:809.4px;">Швейная фабрика ООО</div>
<div class="b" style="left:1194px;top:165px;width:1px;height:25px;background:#a8a8a8;"></div>
<svg class="b" style="left:1200px;top:172px;" width="10" height="10" viewBox="0 0 10 10"><rect x="4.5" y="1.5" width="5" height="5" fill="none" stroke="#383838" stroke-width="1"/><path d="M2.5 4.5 H1.5 V9.5 H6.5 V8.5" fill="none" stroke="#383838" stroke-width="1"/></svg>
<div class="b" style="left:1173px;top:165px;width:1px;height:25px;background:#a8a8a8;"></div>
<svg class="b" style="left:1181px;top:176.0px;" width="5" height="3" viewBox="0 0 5 3"><path d="M0 0 H5 L2.5 3 Z" fill="#404040"/></svg>
<div class="t" style="top:202.00px;height:20px;line-height:20px;font-size:13.5px;color:#4d4d4d;letter-spacing:-0.24px;left:719.5px;">Склад:</div>
<div class="b" style="left:806px;top:199px;width:410px;height:25px;border:1px solid #a8a8a8;border-radius:3px;background:#fff;box-sizing:border-box;"></div>
<div class="t" style="top:202.00px;height:20px;line-height:20px;font-size:13.5px;color:#333333;letter-spacing:-0.433px;left:809.4px;">Склад 1</div>
<div class="b" style="left:1194px;top:199px;width:1px;height:25px;background:#a8a8a8;"></div>
<svg class="b" style="left:1200px;top:206px;" width="10" height="10" viewBox="0 0 10 10"><rect x="4.5" y="1.5" width="5" height="5" fill="none" stroke="#383838" stroke-width="1"/><path d="M2.5 4.5 H1.5 V9.5 H6.5 V8.5" fill="none" stroke="#383838" stroke-width="1"/></svg>
<div class="b" style="left:1173px;top:199px;width:1px;height:25px;background:#a8a8a8;"></div>
<svg class="b" style="left:1181px;top:210.0px;" width="5" height="3" viewBox="0 0 5 3"><path d="M0 0 H5 L2.5 3 Z" fill="#404040"/></svg>
<div class="t" style="top:236.00px;height:20px;line-height:20px;font-size:13.5px;color:#4d4d4d;letter-spacing:-0.1px;left:719.5px;">Расчеты:</div>
<div class="t" style="top:236.00px;height:20px;line-height:20px;font-size:13.5px;color:#1f4fbf;letter-spacing:-0.239px;left:807.4px;text-decoration:underline;">Срок 04.10.2017, 62.01, 62.02, зачет аванса автоматически</div>
<div class="t" style="top:270.00px;height:20px;line-height:20px;font-size:13.5px;color:#1f4fbf;letter-spacing:-0.263px;left:808.4px;text-decoration:underline;">Тип цен: Плановая (выпуск) (НДС сверху)</div>
<div class="b" style="left:201px;top:301px;width:84px;height:26px;border:1px solid #b0b0b0;border-radius:3px;background:linear-gradient(#ffffff 40%,#eeeeee);box-shadow:0 1px 1px rgba(0,0,0,0.3);box-sizing:border-box;"></div>
<div class="t" style="top:304.50px;height:20px;line-height:20px;font-size:13.5px;color:#333;letter-spacing:-0.471px;left:214.8px;">Добавить</div>
<div class="b" style="left:305px;top:301px;width:95px;height:26px;border:1px solid #b0b0b0;border-radius:3px;background:linear-gradient(#ffffff 40%,#eeeeee);box-shadow:0 1px 1px rgba(0,0,0,0.3);box-sizing:border-box;"></div>
<div class="t" style="top:304.50px;height:20px;line-height:20px;font-size:13.5px;color:#333;letter-spacing:-0.487px;left:318.4px;">Заполнить</div>
<svg class="b" style="left:388px;top:312.5px;" width="5" height="3" viewBox="0 0 5 3"><path d="M0 0 H5 L2.5 3 Z" fill="#404040"/></svg>
<div class="b" style="left:409px;top:301px;width:73px;height:26px;border:1px solid #b0b0b0;border-radius:3px;background:linear-gradient(#ffffff 40%,#eeeeee);box-shadow:0 1px 1px rgba(0,0,0,0.3);box-sizing:border-box;"></div>
<div class="t" style="top:304.50px;height:20px;line-height:20px;font-size:13.5px;color:#333;letter-spacing:-0.2px;left:422.2px;">Подбор</div>
<div class="b" style="left:491px;top:301px;width:85px;height:26px;border:1px solid #b0b0b0;border-radius:3px;background:linear-gradient(#ffffff 40%,#eeeeee);box-shadow:0 1px 1px rgba(0,0,0,0.3);box-sizing:border-box;"></div>
<div class="t" style="top:304.50px;height:20px;line-height:20px;font-size:13.5px;color:#333;letter-spacing:-0.343px;left:503.8px;">Изменить</div>
<div class="b" style="left:596px;top:301px;width:60px;height:26px;border:1px solid #b0b0b0;border-radius:3px;background:linear-gradient(#ffffff 40%,#eeeeee);box-shadow:0 1px 1px rgba(0,0,0,0.3);box-sizing:border-box;"></div>
<div class="b" style="left:625px;top:302px;width:1px;height:24px;background:#b0b0b0;"></div>
<svg class="b" style="left:604px;top:307px;" width="13" height="14" viewBox="0 0 13 14"><path d="M6.5 0.8 L12 6.4 H9 V12.8 H4 V6.4 H1 Z" fill="#41a6e6" stroke="#2b86c6" stroke-width="0.8"/></svg>
<svg class="b" style="left:633px;top:307px;" width="13" height="14" viewBox="0 0 13 14"><path d="M6.5 12.8 L12 7.2 H9 V0.8 H4 V7.2 H1 Z" fill="#41a6e6" stroke="#2b86c6" stroke-width="0.8"/></svg>
<div class="b" style="left:676px;top:301px;width:30px;height:26px;border:1px solid #b0b0b0;border-radius:3px;background:linear-gradient(#ffffff 40%,#eeeeee);box-shadow:0 1px 1px rgba(0,0,0,0.3);box-sizing:border-box;"></div>
<svg class="b" style="left:682px;top:305px;" width="18" height="18" viewBox="0 0 18 18"><path d="M1.5 1.5 H8 L10 3.5 V10.5 H1.5 Z" fill="#fff" stroke="#5a6878" stroke-width="0.9"/><path d="M3 4.5 H5.5 M3 6.5 H8.5 M3 8.5 H8.5" stroke="#8090a0" stroke-width="0.8"/><path d="M7.5 6.5 H14 L16 8.5 V15.5 H7.5 Z" fill="#fff" stroke="#5a6878" stroke-width="0.9"/><path d="M9 9.5 H11.5 M9 11.5 H14.5 M9 13.5 H14.5" stroke="#8090a0" stroke-width="0.8"/></svg>
<div class="b" style="left:715px;top:301px;width:30px;height:26px;border:1px solid #d0d0d0;border-radius:3px;background:linear-gradient(#fafafa,#f0f0f0);box-shadow:0 1px 1px rgba(0,0,0,0.12);box-sizing:border-box;"></div>
<svg class="b" style="left:722px;top:305px;" width="18" height="18" viewBox="0 0 18 18"><rect x="1.5" y="2.5" width="11" height="12" rx="1" fill="#d4d4d4" stroke="#c0a898" stroke-width="0.9"/><rect x="4.5" y="1" width="5" height="3" rx="1" fill="#c8c8c8"/><path d="M6.5 6.5 H13 L15 8.5 V15.5 H6.5 Z" fill="#e4eaf0" stroke="#a8b8c8" stroke-width="0.9"/><path d="M8 10 H13.5 M8 12 H13.5" stroke="#b8c8d8" stroke-width="0.8"/></svg>
<div class="b" style="left:1383px;top:301px;width:60px;height:26px;border:1px solid #b0b0b0;border-radius:3px;background:linear-gradient(#ffffff 40%,#eeeeee);box-shadow:0 1px 1px rgba(0,0,0,0.3);box-sizing:border-box;"></div>
<div class="t" style="top:304.50px;height:20px;line-height:20px;font-size:13.5px;color:#333;letter-spacing:0.6px;left:1395.8px;">Еще</div>
<svg class="b" style="left:1432px;top:313.0px;" width="5" height="3" viewBox="0 0 5 3"><path d="M0 0 H5 L2.5 3 Z" fill="#404040"/></svg>
<div class="b" style="left:201px;top:331px;width:1242px;height:78px;border:1px solid #d6d0b8;border-bottom:none;background:#fff;box-sizing:border-box;"></div>
<div class="b" style="left:202px;top:332px;width:1240px;height:29px;background:#f2f2f2;"></div>
<div class="b" style="left:202px;top:362px;width:1240px;height:1px;background:#cccccc;"></div>
<div class="b" style="left:202px;top:364px;width:1240px;height:26px;background:#fbeea0;"></div>
<div class="b" style="left:202px;top:391px;width:1240px;height:1px;background:#e6e6e6;"></div>
<div class="b" style="left:264px;top:332px;width:1px;height:30px;background:#cfcfcf;"></div>
<div class="b" style="left:264px;top:364px;width:1px;height:26px;background:#ffffff;"></div>
<div class="b" style="left:497px;top:332px;width:1px;height:30px;background:#cfcfcf;"></div>
<div class="b" style="left:497px;top:364px;width:1px;height:26px;background:#ffffff;"></div>
<div class="b" style="left:599px;top:332px;width:1px;height:30px;background:#cfcfcf;"></div>
<div class="b" style="left:599px;top:364px;width:1px;height:26px;background:#ffffff;"></div>
<div class="b" style="left:692px;top:332px;width:1px;height:30px;background:#cfcfcf;"></div>
<div class="b" style="left:692px;top:364px;width:1px;height:26px;background:#ffffff;"></div>
<div class="b" style="left:806px;top:332px;width:1px;height:30px;background:#cfcfcf;"></div>
<div class="b" style="left:806px;top:364px;width:1px;height:26px;background:#ffffff;"></div>
<div class="b" style="left:881px;top:332px;width:1px;height:30px;background:#cfcfcf;"></div>
<div class="b" style="left:881px;top:364px;width:1px;height:26px;background:#ffffff;"></div>
<div class="b" style="left:964px;top:332px;width:1px;height:30px;background:#cfcfcf;"></div>
<div class="b" style="left:964px;top:364px;width:1px;height:26px;background:#ffffff;"></div>
<div class="b" style="left:1084px;top:332px;width:1px;height:30px;background:#cfcfcf;"></div>
<div class="b" style="left:1084px;top:364px;width:1px;height:26px;background:#ffffff;"></div>
<div class="b" style="left:1300px;top:332px;width:1px;height:30px;background:#cfcfcf;"></div>
<div class="b" style="left:1300px;top:364px;width:1px;height:26px;background:#ffffff;"></div>
<div class="b" style="left:965px;top:364px;width:119px;height:26px;background:#fad81e;"></div>
<div class="t" style="top:336.50px;height:20px;line-height:20px;font-size:13.5px;color:#4d4d4d;letter-spacing:0.7px;left:217px;">N</div>
<div class="t" style="top:336.50px;height:20px;line-height:20px;font-size:13.5px;color:#4d4d4d;letter-spacing:-0.409px;left:280.1px;">Номенклатура</div>
<div class="t" style="top:336.50px;height:20px;line-height:20px;font-size:13.5px;color:#4d4d4d;letter-spacing:-0.256px;left:513px;">Количество</div>
<div class="t" style="top:336.50px;height:20px;line-height:20px;font-size:13.5px;color:#4d4d4d;letter-spacing:-0.2px;left:615.2px;">Цена</div>
<div class="t" style="top:336.50px;height:20px;line-height:20px;font-size:13.5px;color:#4d4d4d;letter-spacing:-0.15px;left:708px;">Сумма</div>
<div class="t" style="top:336.50px;height:20px;line-height:20px;font-size:13.5px;color:#4d4d4d;letter-spacing:-0.225px;left:821.5px;">% НДС</div>
<div class="t" style="top:336.50px;height:20px;line-height:20px;font-size:13.5px;color:#4d4d4d;letter-spacing:-0.15px;left:897px;">НДС</div>
<div class="t" style="top:336.50px;height:20px;line-height:20px;font-size:13.5px;color:#4d4d4d;letter-spacing:0.1px;left:980px;">Всего</div>
<div class="t" style="top:336.50px;height:20px;line-height:20px;font-size:13.5px;color:#4d4d4d;letter-spacing:-0.22px;left:1100.2px;">Счета учета</div>
<div class="t" style="top:336.50px;height:20px;line-height:20px;font-size:13.5px;color:#4d4d4d;letter-spacing:-0.375px;left:1316px;">Номер ГТД</div>
<div class="t" style="top:367.50px;height:20px;line-height:20px;font-size:13.5px;color:#333333;left:-1251.5px;width:1500px;text-align:right;">1</div>
<div class="t" style="top:367.50px;height:20px;line-height:20px;font-size:13.5px;color:#333333;letter-spacing:-0.305px;left:280.1px;">Пальто женское осеннее</div>
<div class="t" style="top:367.50px;height:20px;line-height:20px;font-size:13.5px;color:#333333;letter-spacing:-0.3px;left:536.5px;">100,000</div>
<div class="t" style="top:367.50px;height:20px;line-height:20px;font-size:13.5px;color:#333333;letter-spacing:-0.412px;left:618.9px;">10 000,00</div>
<div class="t" style="top:367.50px;height:20px;line-height:20px;font-size:13.5px;color:#333333;letter-spacing:-0.318px;left:714px;">1 000 000,00</div>
<div class="t" style="top:367.50px;height:20px;line-height:20px;font-size:13.5px;color:#333333;letter-spacing:-0.3px;left:821.5px;">0%</div>
<div class="t" style="top:367.50px;height:20px;line-height:20px;font-size:13.5px;color:#1a1a1a;letter-spacing:-0.373px;left:993.4px;">1 000 000,00</div>
<div class="t" style="top:367.50px;height:20px;line-height:20px;font-size:13.5px;color:#1f4fbf;letter-spacing:-0.044px;left:1101.2px;text-decoration:underline;">43, 90.01.1, &lt;...&gt;, 90.02.1, 9...</div>
<div class="b" style="left:804px;top:324px;width:81px;height:80px;border:2px solid #dc7a2a;border-radius:26px;box-sizing:border-box;"></div>
<div class="b" style="left:76px;top:408px;width:1541px;height:749px;background:#7f7f7f;"></div>
<div class="b" style="left:78px;top:411px;width:1537px;height:744px;background:#ffffff;"></div>
<div class="b" style="left:88px;top:422px;width:74px;height:24px;border:1px solid #b0b0b0;border-radius:3px;background:linear-gradient(#ffffff 40%,#eeeeee);box-shadow:0 1px 1px rgba(0,0,0,0.3);box-sizing:border-box;"></div>
<div class="b" style="left:125px;top:423px;width:1px;height:22px;background:#d0d0d0;"></div>
<svg class="b" style="left:99px;top:429px;" width="14" height="10" viewBox="0 0 14 10"><path d="M0.5 5 L5.5 0.5 V3.5 H13.5 V6.5 H5.5 V9.5 Z" fill="#4a4a4a"/></svg>
<svg class="b" style="left:136px;top:429px;" width="14" height="10" viewBox="0 0 14 10"><path d="M13.5 5 L8.5 0.5 V3.5 H0.5 V6.5 H8.5 V9.5 Z" fill="#a8a8a8"/></svg>
<div class="t" style="top:420.00px;height:28px;line-height:28px;font-size:19px;color:#000000;letter-spacing:0.08px;left:218.5px;">Счет-фактура выданный 0000-0000007 от 04.10.2017 21:00:00</div>
<svg class="b" style="left:1598px;top:427px;" width="8" height="8" viewBox="0 0 8 8"><path d="M0.4 0.4 L7.6 7.6 M7.6 0.4 L0.4 7.6" stroke="#444" stroke-width="1.1"/></svg>
<div class="b" style="left:88px;top:467px;width:91px;height:26px;border:1px solid #c8a800;border-radius:3px;background:linear-gradient(#fbe84a,#f2ce00);box-shadow:0 1px 1px rgba(0,0,0,0.25);box-sizing:border-box;"></div>
<svg class="b" style="left:94px;top:471px;" width="18" height="18" viewBox="0 0 18 18"><rect x="4" y="4" width="9" height="5" fill="#fff" stroke="#404040" stroke-width="0.8"/><rect x="1" y="8" width="15" height="6" rx="1.5" fill="#5a7aa0" stroke="#304860" stroke-width="0.8"/><rect x="4" y="12" width="9" height="5" fill="#fff" stroke="#404040" stroke-width="0.8"/><path d="M2 3 L4.5 5.5 L9 0.5" stroke="#2aa02a" stroke-width="2" fill="none"/></svg>
<div class="t" style="top:470.00px;height:20px;line-height:20px;font-size:13px;color:#333333;font-weight:bold;letter-spacing:0.42px;left:117.5px;">Печать</div>
<div class="b" style="left:198px;top:467px;width:30px;height:26px;border:1px solid #b0b0b0;border-radius:3px;background:linear-gradient(#ffffff 40%,#eeeeee);box-shadow:0 1px 1px rgba(0,0,0,0.3);box-sizing:border-box;"></div>
<svg class="b" style="left:205px;top:472px;" width="16" height="16" viewBox="0 0 16 16"><path d="M1.5 0.5 H8.5 L12 4 V15.5 H1.5 Z" fill="#fff" stroke="#3a6aa0"/><circle cx="8" cy="9.5" r="3" fill="none" stroke="#1a4a80" stroke-width="1.6"/><path d="M10 11.5 L13.5 15" stroke="#1a4a80" stroke-width="2"/></svg>
<div class="t" style="top:470.50px;height:20px;line-height:20px;font-size:13.5px;color:#4d4d4d;letter-spacing:0.08px;left:237px;">Копий:</div>
<div class="b" style="left:283px;top:468px;width:62px;height:25px;border:1px solid #b8b8b8;border-radius:2px;background:#fff;box-sizing:border-box;"></div>
<div class="b" style="left:323px;top:468px;width:1px;height:25px;background:#c8c8c8;"></div>
<div class="b" style="left:324px;top:480px;width:20px;height:1px;background:#d8d8d8;"></div>
<div class="t" style="top:470.50px;height:20px;line-height:20px;font-size:13.5px;color:#333333;left:-1180px;width:1500px;text-align:right;">1</div>
<svg class="b" style="left:331px;top:473px;" width="5" height="3" viewBox="0 0 5 3"><path d="M0 3 L2.5 0 L5 3 Z" fill="#555"/></svg>
<svg class="b" style="left:331px;top:485px;" width="5" height="3" viewBox="0 0 5 3"><path d="M0 0 L2.5 3 L5 0 Z" fill="#555"/></svg>
<div class="b" style="left:355px;top:467px;width:30px;height:26px;border:1px solid #a8a8a8;border-radius:3px;background:linear-gradient(#d4d4d4,#e4e4e4);box-shadow:inset 0 1px 2px rgba(0,0,0,0.2);box-sizing:border-box;"></div>
<svg class="b" style="left:362px;top:472px;" width="17" height="16" viewBox="0 0 17 16"><rect x="0.5" y="2.5" width="14" height="11" fill="#fff" stroke="#505050"/><path d="M0.5 5.5 H14.5 M0.5 8.5 H14.5 M0.5 11 H14.5 M5 2.5 V13.5 M9.5 2.5 V13.5" stroke="#505050" stroke-width="0.8"/><path d="M6 14 L14 6 L16 8 L8 16 L5.5 16.5 Z" fill="#4ab04a" stroke="#2a702a" stroke-width="0.8"/></svg>
<div class="b" style="left:405px;top:467px;width:30px;height:26px;border:1px solid #b0b0b0;border-radius:3px;background:linear-gradient(#ffffff 40%,#eeeeee);box-shadow:0 1px 1px rgba(0,0,0,0.3);box-sizing:border-box;"></div>
<svg class="b" style="left:412px;top:472px;" width="16" height="16" viewBox="0 0 16 16"><rect x="0.5" y="0.5" width="15" height="15" rx="1" fill="#5a8ad0" stroke="#3a6ab0"/><rect x="3" y="1" width="10" height="6" fill="#fff"/><path d="M4.5 3 H11.5 M4.5 5 H11.5" stroke="#5a8ad0" stroke-width="0.8"/><rect x="4" y="10" width="8" height="5.5" fill="#c0d4f0"/><rect x="5" y="11" width="2" height="3" fill="#3a6ab0"/></svg>
<div class="b" style="left:444px;top:467px;width:30px;height:26px;border:1px solid #b0b0b0;border-radius:3px;background:linear-gradient(#ffffff 40%,#eeeeee);box-shadow:0 1px 1px rgba(0,0,0,0.3);box-sizing:border-box;"></div>
<svg class="b" style="left:451px;top:474px;" width="16" height="12" viewBox="0 0 16 12"><rect x="0.5" y="0.5" width="15" height="11" fill="#f6c870" stroke="#c88a20"/><path d="M0.5 0.5 L8 6.5 L15.5 0.5" fill="none" stroke="#b07818" stroke-width="1"/></svg>
<div class="b" style="left:494px;top:467px;width:30px;height:26px;border:1px solid #b0b0b0;border-radius:3px;background:linear-gradient(#ffffff 40%,#eeeeee);box-shadow:0 1px 1px rgba(0,0,0,0.3);box-sizing:border-box;"></div>
<div class="t" style="top:465.00px;height:30px;line-height:30px;font-size:20px;color:#3a3a3a;left:-241.5px;width:1500px;text-align:center;-webkit-text-stroke:0.3px #3a3a3a;">Σ</div>
<div class="b" style="left:1499px;top:467px;width:61px;height:26px;border:1px solid #b0b0b0;border-radius:3px;background:linear-gradient(#ffffff 40%,#eeeeee);box-shadow:0 1px 1px rgba(0,0,0,0.3);box-sizing:border-box;"></div>
<div class="t" style="top:470.50px;height:20px;line-height:20px;font-size:13.5px;color:#333;letter-spacing:0.6px;left:1512.3px;">Еще</div>
<svg class="b" style="left:1548px;top:479.0px;" width="5" height="3" viewBox="0 0 5 3"><path d="M0 0 H5 L2.5 3 Z" fill="#404040"/></svg>
<div class="b" style="left:1569px;top:467px;width:30px;height:26px;border:1px solid #b0b0b0;border-radius:3px;background:linear-gradient(#ffffff 40%,#eeeeee);box-shadow:0 1px 1px rgba(0,0,0,0.3);box-sizing:border-box;"></div>
<div class="t" style="top:469.00px;height:23px;line-height:23px;font-size:15.5px;color:#1a1a1a;left:834.4000000000001px;width:1500px;text-align:center;">?</div>
<svg class="b" style="left:86px;top:503px;" width="18" height="17" viewBox="0 0 18 17"><g fill="none" stroke="#3c3c3c" stroke-width="1"><path d="M5.5 2.5 H14.5 V13.5"/><path d="M4.5 4.5 H12.5 V14.5"/><path d="M4.5 5.5 H2.5 V9.5 H4.5"/><path d="M14.5 5.5 H16.5 V9.5 H14.5"/><path d="M6 6.5 H12 M6 6.5 L7.5 5.2 M6 6.5 L7.5 7.8"/><path d="M4.5 9.5 H10.5 M10.5 9.5 L9 8.2 M10.5 9.5 L9 10.8"/><path d="M4.5 9.5 V14.5 H6.5"/></g><text x="7.3" y="16.3" font-size="5.5" fill="#3c3c3c" font-family="Liberation Sans" font-weight="bold">Я</text></svg>
<div class="t" style="top:502.00px;height:20px;line-height:20px;font-size:13.5px;color:#1f4fbf;letter-spacing:-0.259px;left:113px;text-decoration:underline;">Подключить "ООО "Швейная фабрика"" к ЭДО</div>
<div class="b" style="left:88px;top:528px;width:1511px;height:618px;border:1px solid #9c9c9c;border-left-width:2px;border-top-width:2px;background:#fff;box-sizing:border-box;"></div>
<div class="b" style="left:90px;top:530px;width:1494px;height:601px;overflow:hidden;">
<div class="b" style="left:-90px;top:-530px;width:1618px;height:1157px;">
<div class="b" style="left:89px;top:529px;width:1495px;height:17px;background:linear-gradient(#ffffff 30%,#f3f3f3);"></div>
<div class="b" style="left:457px;top:529px;width:75px;height:17px;background:linear-gradient(#f2f2f2,#e2e2e2);"></div>
<div class="b" style="left:89px;top:546px;width:1495px;height:1px;background:#a0a0a0;"></div>
<div class="b" style="left:131px;top:530px;width:1px;height:16px;background:#a8a8a8;"></div>
<div class="b" style="left:140px;top:530px;width:1px;height:16px;background:#a8a8a8;"></div>
<div class="b" style="left:392px;top:530px;width:1px;height:16px;background:#a8a8a8;"></div>
<div class="b" style="left:457px;top:530px;width:1px;height:16px;background:#a8a8a8;"></div>
<div class="b" style="left:532px;top:530px;width:1px;height:16px;background:#a8a8a8;"></div>
<div class="b" style="left:542px;top:530px;width:1px;height:16px;background:#a8a8a8;"></div>
<div class="b" style="left:621px;top:530px;width:1px;height:16px;background:#a8a8a8;"></div>
<div class="b" style="left:742px;top:530px;width:1px;height:16px;background:#a8a8a8;"></div>
<div class="b" style="left:814px;top:530px;width:1px;height:16px;background:#a8a8a8;"></div>
<div class="b" style="left:891px;top:530px;width:1px;height:16px;background:#a8a8a8;"></div>
<div class="b" style="left:970px;top:530px;width:1px;height:16px;background:#a8a8a8;"></div>
<div class="b" style="left:1099px;top:530px;width:1px;height:16px;background:#a8a8a8;"></div>
<div class="b" style="left:1116px;top:530px;width:1px;height:16px;background:#a8a8a8;"></div>
<div class="b" style="left:1194px;top:530px;width:1px;height:16px;background:#a8a8a8;"></div>
<div class="b" style="left:1308px;top:530px;width:1px;height:16px;background:#a8a8a8;"></div>
<div class="t" style="top:529.70px;height:20px;line-height:20px;font-size:13.5px;color:#333333;left:-614.5px;width:1500px;text-align:center;">1</div>
<div class="t" style="top:529.70px;height:20px;line-height:20px;font-size:13.5px;color:#333333;left:-484.0px;width:1500px;text-align:center;">2</div>
<div class="t" style="top:529.70px;height:20px;line-height:20px;font-size:13.5px;color:#333333;left:-325.5px;width:1500px;text-align:center;">3</div>
<div class="t" style="top:529.20px;height:20px;line-height:20px;font-size:13px;color:#333333;font-weight:bold;left:-255.5px;width:1500px;text-align:center;font-size:13.5px;">4</div>
<div class="t" style="top:529.70px;height:20px;line-height:20px;font-size:13.5px;color:#333333;left:-213.0px;width:1500px;text-align:center;">5</div>
<div class="t" style="top:529.70px;height:20px;line-height:20px;font-size:13.5px;color:#333333;left:-168.5px;width:1500px;text-align:center;">6</div>
<div class="t" style="top:529.70px;height:20px;line-height:20px;font-size:13.5px;color:#333333;left:-68.5px;width:1500px;text-align:center;">7</div>
<div class="t" style="top:529.70px;height:20px;line-height:20px;font-size:13.5px;color:#333333;left:28.0px;width:1500px;text-align:center;">8</div>
<div class="t" style="top:529.70px;height:20px;line-height:20px;font-size:13.5px;color:#333333;left:102.5px;width:1500px;text-align:center;">9</div>
<div class="t" style="top:529.70px;height:20px;line-height:20px;font-size:13.5px;color:#333333;left:180.5px;width:1500px;text-align:center;">10</div>
<div class="t" style="top:529.70px;height:20px;line-height:20px;font-size:13.5px;color:#333333;left:284.5px;width:1500px;text-align:center;">11</div>
<div class="t" style="top:529.70px;height:20px;line-height:20px;font-size:13.5px;color:#333333;left:357.5px;width:1500px;text-align:center;">12</div>
<div class="t" style="top:529.70px;height:20px;line-height:20px;font-size:13.5px;color:#333333;left:405.0px;width:1500px;text-align:center;">13</div>
<div class="t" style="top:529.70px;height:20px;line-height:20px;font-size:13.5px;color:#333333;left:501.0px;width:1500px;text-align:center;">14</div>
<div class="t" style="top:529.70px;height:20px;line-height:20px;font-size:13.5px;color:#333333;left:742.0px;width:1500px;text-align:center;">15</div>
<div class="b" style="left:131px;top:546px;width:1px;height:585px;background:#a0a0a0;"></div>
<div class="b" style="left:89px;top:572px;width:42px;height:1px;background:#a0a0a0;"></div>
<div class="t" style="top:550.00px;height:20px;line-height:20px;font-size:13.5px;color:#333333;left:-640.5px;width:1500px;text-align:center;">1</div>
<div class="b" style="left:89px;top:604px;width:42px;height:1px;background:#a0a0a0;"></div>
<div class="t" style="top:579.00px;height:20px;line-height:20px;font-size:13.5px;color:#333333;left:-640.5px;width:1500px;text-align:center;">2</div>
<div class="b" style="left:89px;top:635px;width:42px;height:1px;background:#a0a0a0;"></div>
<div class="t" style="top:610.50px;height:20px;line-height:20px;font-size:13.5px;color:#333333;left:-640.5px;width:1500px;text-align:center;">3</div>
<div class="b" style="left:89px;top:652px;width:42px;height:1px;background:#a0a0a0;"></div>
<div class="t" style="top:634.50px;height:20px;line-height:20px;font-size:13.5px;color:#333333;left:-640.5px;width:1500px;text-align:center;">4</div>
<div class="b" style="left:89px;top:669px;width:42px;height:1px;background:#a0a0a0;"></div>
<div class="t" style="top:651.50px;height:20px;line-height:20px;font-size:13.5px;color:#333333;left:-640.5px;width:1500px;text-align:center;">5</div>
<div class="b" style="left:89px;top:686px;width:42px;height:1px;background:#a0a0a0;"></div>
<div class="t" style="top:668.50px;height:20px;line-height:20px;font-size:13.5px;color:#333333;left:-640.5px;width:1500px;text-align:center;">6</div>
<div class="b" style="left:89px;top:703px;width:42px;height:1px;background:#a0a0a0;"></div>
<div class="t" style="top:685.50px;height:20px;line-height:20px;font-size:13.5px;color:#333333;left:-640.5px;width:1500px;text-align:center;">7</div>
<div class="b" style="left:89px;top:720px;width:42px;height:1px;background:#a0a0a0;"></div>
<div class="t" style="top:702.50px;height:20px;line-height:20px;font-size:13.5px;color:#333333;left:-640.5px;width:1500px;text-align:center;">8</div>
<div class="b" style="left:89px;top:737px;width:42px;height:1px;background:#a0a0a0;"></div>
<div class="t" style="top:719.50px;height:20px;line-height:20px;font-size:13.5px;color:#333333;left:-640.5px;width:1500px;text-align:center;">9</div>
<div class="b" style="left:89px;top:754px;width:42px;height:1px;background:#a0a0a0;"></div>
<div class="t" style="top:736.50px;height:20px;line-height:20px;font-size:13.5px;color:#333333;left:-640.5px;width:1500px;text-align:center;">10</div>
<div class="b" style="left:89px;top:771px;width:42px;height:1px;background:#a0a0a0;"></div>
<div class="t" style="top:753.50px;height:20px;line-height:20px;font-size:13.5px;color:#333333;left:-640.5px;width:1500px;text-align:center;">11</div>
<div class="b" style="left:89px;top:788px;width:42px;height:1px;background:#a0a0a0;"></div>
<div class="t" style="top:770.50px;height:20px;line-height:20px;font-size:13.5px;color:#333333;left:-640.5px;width:1500px;text-align:center;">12</div>
<div class="b" style="left:89px;top:805px;width:42px;height:1px;background:#a0a0a0;"></div>
<div class="t" style="top:787.50px;height:20px;line-height:20px;font-size:13.5px;color:#333333;left:-640.5px;width:1500px;text-align:center;">13</div>
<div class="b" style="left:89px;top:822px;width:42px;height:1px;background:#a0a0a0;"></div>
<div class="t" style="top:804.50px;height:20px;line-height:20px;font-size:13.5px;color:#333333;left:-640.5px;width:1500px;text-align:center;">14</div>
<div class="b" style="left:89px;top:875px;width:42px;height:1px;background:#a0a0a0;"></div>
<div class="t" style="top:839.50px;height:20px;line-height:20px;font-size:13.5px;color:#333333;left:-640.5px;width:1500px;text-align:center;">15</div>
<div class="b" style="left:89px;top:928px;width:42px;height:1px;background:#a0a0a0;"></div>
<div class="t" style="top:892.50px;height:20px;line-height:20px;font-size:13.5px;color:#333333;left:-640.5px;width:1500px;text-align:center;">16</div>
<div class="b" style="left:89px;top:945px;width:42px;height:1px;background:#a0a0a0;"></div>
<div class="t" style="top:927.50px;height:20px;line-height:20px;font-size:13.5px;color:#333333;left:-640.5px;width:1500px;text-align:center;">17</div>
<div class="b" style="left:89px;top:962px;width:42px;height:1px;background:#a0a0a0;"></div>
<div class="t" style="top:944.50px;height:20px;line-height:20px;font-size:13.5px;color:#333333;left:-640.5px;width:1500px;text-align:center;">18</div>
<div class="b" style="left:89px;top:981px;width:42px;height:1px;background:#a0a0a0;"></div>
<div class="t" style="top:962.50px;height:20px;line-height:20px;font-size:13.5px;color:#333333;left:-640.5px;width:1500px;text-align:center;">19</div>
<div class="b" style="left:89px;top:998px;width:42px;height:1px;background:#a0a0a0;"></div>
<div class="t" style="top:980.50px;height:20px;line-height:20px;font-size:13.5px;color:#333333;left:-640.5px;width:1500px;text-align:center;">20</div>
<div class="b" style="left:89px;top:1031px;width:42px;height:1px;background:#a0a0a0;"></div>
<div class="t" style="top:1005.50px;height:20px;line-height:20px;font-size:13.5px;color:#333333;left:-640.5px;width:1500px;text-align:center;">21</div>
<div class="b" style="left:89px;top:1048px;width:42px;height:1px;background:#a0a0a0;"></div>
<div class="t" style="top:1030.50px;height:20px;line-height:20px;font-size:13.5px;color:#333333;left:-640.5px;width:1500px;text-align:center;">22</div>
<div class="b" style="left:89px;top:1065px;width:42px;height:1px;background:#a0a0a0;"></div>
<div class="t" style="top:1047.50px;height:20px;line-height:20px;font-size:13.5px;color:#333333;left:-640.5px;width:1500px;text-align:center;">23</div>
<div class="b" style="left:89px;top:1098px;width:42px;height:1px;background:#a0a0a0;"></div>
<div class="t" style="top:1072.50px;height:20px;line-height:20px;font-size:13.5px;color:#333333;left:-640.5px;width:1500px;text-align:center;">24</div>
<div class="b" style="left:89px;top:1124px;width:42px;height:1px;background:#a0a0a0;"></div>
<div class="t" style="top:1102.00px;height:20px;line-height:20px;font-size:13.5px;color:#333333;left:-640.5px;width:1500px;text-align:center;">25</div>
<div class="b" style="left:89px;top:1142px;width:42px;height:1px;background:#a0a0a0;"></div>
<div class="t" style="top:1124.00px;height:20px;line-height:20px;font-size:13.5px;color:#333333;left:-640.5px;width:1500px;text-align:center;">26</div>
<div class="b" style="left:140px;top:546px;width:1px;height:276px;background:#e3e3e3;"></div>
<div class="b" style="left:132px;top:572px;width:1452px;height:1px;background:#e3e3e3;"></div>
<div class="b" style="left:132px;top:604px;width:1452px;height:1px;background:#e3e3e3;"></div>
<div class="b" style="left:132px;top:635px;width:1452px;height:1px;background:#e3e3e3;"></div>
<div class="b" style="left:132px;top:652px;width:1452px;height:1px;background:#e3e3e3;"></div>
<div class="b" style="left:132px;top:669px;width:1452px;height:1px;background:#e3e3e3;"></div>
<div class="b" style="left:132px;top:686px;width:1452px;height:1px;background:#e3e3e3;"></div>
<div class="b" style="left:132px;top:703px;width:1452px;height:1px;background:#e3e3e3;"></div>
<div class="b" style="left:132px;top:720px;width:1452px;height:1px;background:#e3e3e3;"></div>
<div class="b" style="left:132px;top:737px;width:1452px;height:1px;background:#e3e3e3;"></div>
<div class="b" style="left:132px;top:754px;width:1452px;height:1px;background:#e3e3e3;"></div>
<div class="b" style="left:132px;top:771px;width:1452px;height:1px;background:#e3e3e3;"></div>
<div class="b" style="left:132px;top:788px;width:1452px;height:1px;background:#e3e3e3;"></div>
<div class="b" style="left:132px;top:805px;width:1452px;height:1px;background:#e3e3e3;"></div>
<div class="b" style="left:132px;top:822px;width:1452px;height:1px;background:#e3e3e3;"></div>
<div class="b" style="left:140px;top:982px;width:1px;height:16px;background:#e3e3e3;"></div>
<div class="b" style="left:392px;top:982px;width:1px;height:16px;background:#e3e3e3;"></div>
<div class="b" style="left:457px;top:982px;width:1px;height:16px;background:#e3e3e3;"></div>
<div class="b" style="left:532px;top:982px;width:1px;height:16px;background:#e3e3e3;"></div>
<div class="b" style="left:542px;top:982px;width:1px;height:16px;background:#e3e3e3;"></div>
<div class="b" style="left:621px;top:982px;width:1px;height:16px;background:#e3e3e3;"></div>
<div class="b" style="left:742px;top:982px;width:1px;height:16px;background:#e3e3e3;"></div>
<div class="b" style="left:814px;top:982px;width:1px;height:16px;background:#e3e3e3;"></div>
<div class="b" style="left:891px;top:982px;width:1px;height:16px;background:#e3e3e3;"></div>
<div class="b" style="left:970px;top:982px;width:1px;height:16px;background:#e3e3e3;"></div>
<div class="b" style="left:1099px;top:982px;width:1px;height:16px;background:#e3e3e3;"></div>
<div class="b" style="left:1116px;top:982px;width:1px;height:16px;background:#e3e3e3;"></div>
<div class="b" style="left:1194px;top:982px;width:1px;height:16px;background:#e3e3e3;"></div>
<div class="b" style="left:140px;top:998px;width:1px;height:50px;background:#e3e3e3;"></div>
<div class="b" style="left:392px;top:998px;width:1px;height:50px;background:#e3e3e3;"></div>
<div class="b" style="left:532px;top:998px;width:1px;height:50px;background:#e3e3e3;"></div>
<div class="b" style="left:542px;top:998px;width:1px;height:50px;background:#e3e3e3;"></div>
<div class="b" style="left:742px;top:998px;width:1px;height:50px;background:#e3e3e3;"></div>
<div class="b" style="left:970px;top:998px;width:1px;height:50px;background:#e3e3e3;"></div>
<div class="b" style="left:1099px;top:998px;width:1px;height:50px;background:#e3e3e3;"></div>
<div class="b" style="left:1116px;top:998px;width:1px;height:50px;background:#e3e3e3;"></div>
<div class="b" style="left:140px;top:1048px;width:1px;height:17px;background:#e3e3e3;"></div>
<div class="b" style="left:392px;top:1048px;width:1px;height:17px;background:#e3e3e3;"></div>
<div class="b" style="left:457px;top:1048px;width:1px;height:17px;background:#e3e3e3;"></div>
<div class="b" style="left:532px;top:1048px;width:1px;height:17px;background:#e3e3e3;"></div>
<div class="b" style="left:542px;top:1048px;width:1px;height:17px;background:#e3e3e3;"></div>
<div class="b" style="left:621px;top:1048px;width:1px;height:17px;background:#e3e3e3;"></div>
<div class="b" style="left:742px;top:1048px;width:1px;height:17px;background:#e3e3e3;"></div>
<div class="b" style="left:814px;top:1048px;width:1px;height:17px;background:#e3e3e3;"></div>
<div class="b" style="left:891px;top:1048px;width:1px;height:17px;background:#e3e3e3;"></div>
<div class="b" style="left:970px;top:1048px;width:1px;height:17px;background:#e3e3e3;"></div>
<div class="b" style="left:1099px;top:1048px;width:1px;height:17px;background:#e3e3e3;"></div>
<div class="b" style="left:1116px;top:1048px;width:1px;height:17px;background:#e3e3e3;"></div>
<div class="b" style="left:1194px;top:1048px;width:1px;height:17px;background:#e3e3e3;"></div>
<div class="b" style="left:140px;top:1065px;width:1px;height:59px;background:#e3e3e3;"></div>
<div class="b" style="left:392px;top:1065px;width:1px;height:59px;background:#e3e3e3;"></div>
<div class="b" style="left:532px;top:1065px;width:1px;height:59px;background:#e3e3e3;"></div>
<div class="b" style="left:542px;top:1065px;width:1px;height:59px;background:#e3e3e3;"></div>
<div class="b" style="left:742px;top:1065px;width:1px;height:59px;background:#e3e3e3;"></div>
<div class="b" style="left:814px;top:1065px;width:1px;height:59px;background:#e3e3e3;"></div>
<div class="b" style="left:140px;top:1125px;width:1px;height:6px;background:#e3e3e3;"></div>
<div class="b" style="left:392px;top:1125px;width:1px;height:6px;background:#e3e3e3;"></div>
<div class="b" style="left:457px;top:1125px;width:1px;height:6px;background:#e3e3e3;"></div>
<div class="b" style="left:532px;top:1125px;width:1px;height:6px;background:#e3e3e3;"></div>
<div class="b" style="left:542px;top:1125px;width:1px;height:6px;background:#e3e3e3;"></div>
<div class="b" style="left:621px;top:1125px;width:1px;height:6px;background:#e3e3e3;"></div>
<div class="b" style="left:742px;top:1125px;width:1px;height:6px;background:#e3e3e3;"></div>
<div class="b" style="left:814px;top:1125px;width:1px;height:6px;background:#e3e3e3;"></div>
<div class="b" style="left:891px;top:1125px;width:1px;height:6px;background:#e3e3e3;"></div>
<div class="b" style="left:970px;top:1125px;width:1px;height:6px;background:#e3e3e3;"></div>
<div class="b" style="left:1099px;top:1125px;width:1px;height:6px;background:#e3e3e3;"></div>
<div class="b" style="left:1116px;top:1125px;width:1px;height:6px;background:#e3e3e3;"></div>
<div class="b" style="left:1194px;top:1125px;width:1px;height:6px;background:#e3e3e3;"></div>
<div class="b" style="left:132px;top:998px;width:1452px;height:1px;background:#e3e3e3;"></div>
<div class="b" style="left:132px;top:1031px;width:1452px;height:1px;background:#e3e3e3;"></div>
<div class="b" style="left:132px;top:1048px;width:1452px;height:1px;background:#e3e3e3;"></div>
<div class="b" style="left:132px;top:1065px;width:1452px;height:1px;background:#e3e3e3;"></div>
<div class="b" style="left:132px;top:1098px;width:1452px;height:1px;background:#e3e3e3;"></div>
<div class="b" style="left:1312px;top:981px;width:272px;height:1px;background:#e3e3e3;"></div>
<div class="b" style="left:439px;top:962px;width:1px;height:19px;background:#e3e3e3;"></div>
<div class="b" style="left:517px;top:962px;width:1px;height:19px;background:#e3e3e3;"></div>
<div class="b" style="left:576px;top:962px;width:1px;height:19px;background:#e3e3e3;"></div>
<div class="b" style="left:684px;top:962px;width:1px;height:19px;background:#e3e3e3;"></div>
<div class="b" style="left:769px;top:962px;width:1px;height:19px;background:#e3e3e3;"></div>
<div class="b" style="left:1388px;top:962px;width:1px;height:19px;background:#e3e3e3;"></div>
<div class="b" style="left:1463px;top:962px;width:1px;height:19px;background:#e3e3e3;"></div>
<div class="b" style="left:392px;top:1031px;width:141px;height:1px;background:#2a2a2a;"></div>
<div class="b" style="left:542px;top:1031px;width:201px;height:1px;background:#2a2a2a;"></div>
<div class="b" style="left:970px;top:1031px;width:130px;height:1px;background:#2a2a2a;"></div>
<div class="b" style="left:1116px;top:1031px;width:193px;height:1px;background:#2a2a2a;"></div>
<div class="b" style="left:392px;top:1098px;width:141px;height:1px;background:#2a2a2a;"></div>
<div class="b" style="left:542px;top:1098px;width:201px;height:1px;background:#2a2a2a;"></div>
<div class="b" style="left:814px;top:1098px;width:495px;height:1px;background:#2a2a2a;"></div>
<div class="b" style="left:132px;top:1124px;width:1452px;height:1px;background:repeating-linear-gradient(90deg,#333 0 6px,transparent 6px 8px);"></div>
<div class="b" style="left:1308px;top:981px;width:1px;height:143px;background:repeating-linear-gradient(180deg,#333 0 6px,transparent 6px 8px);"></div>
<div class="b" style="left:140px;top:822px;width:1444px;height:1px;background:#2a2a2a;"></div>
<div class="b" style="left:140px;top:822px;width:1px;height:160px;background:#2a2a2a;"></div>
<div class="b" style="left:439px;top:822px;width:1px;height:141px;background:#2a2a2a;"></div>
<div class="b" style="left:517px;top:822px;width:1px;height:141px;background:#2a2a2a;"></div>
<div class="b" style="left:684px;top:822px;width:1px;height:141px;background:#2a2a2a;"></div>
<div class="b" style="left:769px;top:822px;width:1px;height:141px;background:#2a2a2a;"></div>
<div class="b" style="left:866px;top:822px;width:1px;height:141px;background:#2a2a2a;"></div>
<div class="b" style="left:980px;top:822px;width:1px;height:141px;background:#2a2a2a;"></div>
<div class="b" style="left:1057px;top:822px;width:1px;height:141px;background:#2a2a2a;"></div>
<div class="b" style="left:1127px;top:822px;width:1px;height:141px;background:#2a2a2a;"></div>
<div class="b" style="left:1207px;top:822px;width:1px;height:141px;background:#2a2a2a;"></div>
<div class="b" style="left:1312px;top:822px;width:1px;height:141px;background:#2a2a2a;"></div>
<div class="b" style="left:1463px;top:822px;width:1px;height:141px;background:#2a2a2a;"></div>
<div class="b" style="left:576px;top:875px;width:1px;height:88px;background:#2a2a2a;"></div>
<div class="b" style="left:1388px;top:875px;width:1px;height:88px;background:#2a2a2a;"></div>
<div class="b" style="left:517px;top:875px;width:168px;height:1px;background:#2a2a2a;"></div>
<div class="b" style="left:1312px;top:875px;width:152px;height:1px;background:#2a2a2a;"></div>
<div class="b" style="left:140px;top:928px;width:1444px;height:1px;background:#2a2a2a;"></div>
<div class="b" style="left:140px;top:945px;width:1444px;height:1px;background:#2a2a2a;"></div>
<div class="b" style="left:140px;top:962px;width:1444px;height:1px;background:#2a2a2a;"></div>
<div class="b" style="left:866px;top:962px;width:1px;height:20px;background:#2a2a2a;"></div>
<div class="b" style="left:980px;top:962px;width:1px;height:20px;background:#2a2a2a;"></div>
<div class="b" style="left:1127px;top:962px;width:1px;height:20px;background:#2a2a2a;"></div>
<div class="b" style="left:1207px;top:962px;width:1px;height:20px;background:#2a2a2a;"></div>
<div class="b" style="left:1312px;top:962px;width:1px;height:20px;background:#2a2a2a;"></div>
<div class="b" style="left:140px;top:981px;width:1173px;height:1px;background:#2a2a2a;"></div>
<div class="t" style="top:545.50px;height:15px;line-height:15px;font-size:10.2px;color:#333333;letter-spacing:0.279px;left:1232.4px;">Приложение № 1 к постановлению Правительства Российской Федерации</div>
<div class="t" style="top:558.50px;height:15px;line-height:15px;font-size:10.2px;color:#333333;letter-spacing:0.273px;left:1275px;">(в редакции постановления Правительства Российской Федерации</div>
<div class="t" style="top:570.70px;height:36px;line-height:36px;font-size:24px;color:#222222;font-weight:bold;letter-spacing:0.072px;left:145px;">Счет-фактура № 7 от 4 октября 2017 г.</div>
<div class="t" style="top:602.30px;height:36px;line-height:36px;font-size:24px;color:#222222;font-weight:bold;letter-spacing:-0.319px;left:144px;">Исправление № -- от --</div>
<div class="t" style="top:634.50px;height:20px;line-height:20px;font-size:13.5px;color:#333333;letter-spacing:-0.397px;left:143px;white-space:pre;">Продавец: ООО "Швейная фабрика"</div>
<div class="t" style="top:651.50px;height:20px;line-height:20px;font-size:13.5px;color:#333333;letter-spacing:-0.128px;left:144px;white-space:pre;">Адрес: 127434, Москва г, Дмитровское ш, дом № 9</div>
<div class="t" style="top:668.50px;height:20px;line-height:20px;font-size:13.5px;color:#333333;letter-spacing:-0.4px;left:143px;white-space:pre;">ИНН/КПП продавца: 7736520080/773601001</div>
<div class="t" style="top:685.50px;height:20px;line-height:20px;font-size:13.5px;color:#333333;letter-spacing:-0.209px;left:143px;white-space:pre;">Грузоотправитель и его адрес: он же</div>
<div class="t" style="top:702.50px;height:20px;line-height:20px;font-size:13.5px;color:#333333;letter-spacing:-0.11px;left:143px;white-space:pre;">Грузополучатель и его адрес: ООО "Женская одежда", Беларусь, г. Минск, ул. Минина, Дом 21, Корпус 2</div>
<div class="t" style="top:719.50px;height:20px;line-height:20px;font-size:13.5px;color:#333333;letter-spacing:-0.338px;left:143px;white-space:pre;">К платежно-расчетному документу №     от</div>
<div class="t" style="top:736.50px;height:20px;line-height:20px;font-size:13.5px;color:#333333;letter-spacing:-0.219px;left:143px;white-space:pre;">Покупатель: ООО "Женская одежда"</div>
<div class="t" style="top:753.50px;height:20px;line-height:20px;font-size:13.5px;color:#333333;letter-spacing:-0.059px;left:144px;white-space:pre;">Адрес: Беларусь, г. Минск, ул. Минина, Дом 21, Корпус 2</div>
<div class="t" style="top:770.50px;height:20px;line-height:20px;font-size:13.5px;color:#333333;letter-spacing:-0.357px;left:143px;white-space:pre;">ИНН/КПП покупателя: 123456789</div>
<div class="t" style="top:787.50px;height:20px;line-height:20px;font-size:13.5px;color:#333333;letter-spacing:-0.224px;left:143px;white-space:pre;">Валюта: наименование, код Российский рубль, 643</div>
<div class="t" style="top:804.50px;height:20px;line-height:20px;font-size:13.5px;color:#333333;letter-spacing:-0.334px;left:143px;white-space:pre;">Идентификатор государственного контракта, договора (соглашения) (при наличии):</div>
<div class="t" style="left:140px;width:299px;top:852.58px;line-height:15.84px;font-size:13.1px;color:#333333;text-align:center;">Наименование товара (описание выполненных<br>работ, оказанных услуг), имущественного<br>права</div>
<div class="t" style="left:439px;width:78px;top:860.28px;line-height:15.84px;font-size:13.1px;color:#333333;text-align:center;">Код вида<br>товара</div>
<div class="t" style="left:517px;width:167px;top:834.28px;line-height:15.84px;font-size:13.1px;color:#333333;text-align:center;">Единица<br>измерения</div>
<div class="t" style="left:517px;width:59px;top:895.38px;line-height:15.84px;font-size:13.1px;color:#333333;text-align:center;">код</div>
<div class="t" style="left:576px;width:108px;top:879.28px;line-height:15.84px;font-size:13.1px;color:#333333;text-align:center;">условное<br>обозначение<br>(национальное)</div>
<div class="t" style="left:684px;width:85px;top:852.08px;line-height:15.84px;font-size:13.1px;color:#333333;text-align:center;">Коли-<br>чество<br>(объем)</div>
<div class="t" style="left:769px;width:97px;top:852.08px;line-height:15.84px;font-size:13.1px;color:#333333;text-align:center;">Цена (тариф)<br>за единицу<br>измерения</div>
<div class="t" style="left:866px;width:114px;top:828.58px;line-height:15.84px;font-size:13.1px;color:#333333;text-align:center;">Стоимость<br>товаров (работ,<br>услуг),<br>имущественных<br>прав без налога -<br>всего</div>
<div class="t" style="left:980px;width:77px;top:844.18px;line-height:15.84px;font-size:13.1px;color:#333333;text-align:center;">В том<br>числе<br>сумма<br>акциза</div>
<div class="t" style="left:1057px;width:70px;top:860.28px;line-height:15.84px;font-size:13.1px;color:#333333;text-align:center;">Налогова<br>я ставка</div>
<div class="t" style="left:1127px;width:80px;top:836.78px;line-height:15.84px;font-size:13.1px;color:#333333;text-align:center;">Сумма<br>налога,<br>предъявляе<br>мая<br>покупателю</div>
<div class="t" style="left:1207px;width:105px;top:828.58px;line-height:15.84px;font-size:13.1px;color:#333333;text-align:center;">Стоимость<br>товаров (работ,<br>услуг),<br>имущественны<br>х прав с<br>налогом - всего</div>
<div class="t" style="left:1312px;width:151px;top:834.18px;line-height:15.84px;font-size:13.1px;color:#333333;text-align:center;">Страна<br>происхождения товара</div>
<div class="t" style="left:1312px;width:76px;top:887.18px;line-height:15.84px;font-size:13.1px;color:#333333;text-align:center;">цифровой<br>код</div>
<div class="t" style="left:1388px;width:75px;top:879.38px;line-height:15.84px;font-size:13.1px;color:#333333;text-align:center;">краткое<br>наименова<br>ние</div>
<div class="t" style="left:1463px;width:117px;top:843.78px;line-height:15.84px;font-size:13.1px;color:#333333;text-align:center;">Регистрационный<br>номер<br>таможенной<br>декларации</div>
<div class="t" style="top:929.00px;height:16px;line-height:16px;font-size:11px;color:#333333;left:-460px;width:1500px;text-align:center;">1</div>
<div class="t" style="top:929.00px;height:16px;line-height:16px;font-size:11px;color:#333333;left:-272px;width:1500px;text-align:center;">1а</div>
<div class="t" style="top:929.00px;height:16px;line-height:16px;font-size:11px;color:#333333;left:-203.5px;width:1500px;text-align:center;">2</div>
<div class="t" style="top:929.00px;height:16px;line-height:16px;font-size:11px;color:#333333;left:-120px;width:1500px;text-align:center;">2а</div>
<div class="t" style="top:929.00px;height:16px;line-height:16px;font-size:11px;color:#333333;left:-23px;width:1500px;text-align:center;">3</div>
<div class="t" style="top:929.00px;height:16px;line-height:16px;font-size:11px;color:#333333;left:67.5px;width:1500px;text-align:center;">4</div>
<div class="t" style="top:929.00px;height:16px;line-height:16px;font-size:11px;color:#333333;left:173px;width:1500px;text-align:center;">5</div>
<div class="t" style="top:929.00px;height:16px;line-height:16px;font-size:11px;color:#333333;left:268.5px;width:1500px;text-align:center;">6</div>
<div class="t" style="top:929.00px;height:16px;line-height:16px;font-size:11px;color:#333333;left:342px;width:1500px;text-align:center;">7</div>
<div class="t" style="top:929.00px;height:16px;line-height:16px;font-size:11px;color:#333333;left:417px;width:1500px;text-align:center;">8</div>
<div class="t" style="top:929.00px;height:16px;line-height:16px;font-size:11px;color:#333333;left:509.5px;width:1500px;text-align:center;">9</div>
<div class="t" style="top:929.00px;height:16px;line-height:16px;font-size:11px;color:#333333;left:600px;width:1500px;text-align:center;">10</div>
<div class="t" style="top:929.00px;height:16px;line-height:16px;font-size:11px;color:#333333;left:676px;width:1500px;text-align:center;">10а</div>
<div class="t" style="top:929.00px;height:16px;line-height:16px;font-size:11px;color:#333333;left:772px;width:1500px;text-align:center;">11</div>
<div class="t" style="top:944.50px;height:19px;line-height:19px;font-size:12.9px;color:#333333;left:144px;">Пальто женское осеннее</div>
<div class="t" style="top:944.50px;height:19px;line-height:19px;font-size:12.9px;color:#333333;letter-spacing:-0.1px;left:442.5px;">6202110000</div>
<div class="t" style="top:944.50px;height:19px;line-height:19px;font-size:12.9px;color:#333333;left:520px;">796</div>
<div class="t" style="top:944.50px;height:19px;line-height:19px;font-size:12.9px;color:#333333;left:580px;">шт</div>
<div class="t" style="top:944.50px;height:19px;line-height:19px;font-size:12.9px;color:#333333;left:-734.5px;width:1500px;text-align:right;">100,000</div>
<div class="t" style="top:944.50px;height:19px;line-height:19px;font-size:12.9px;color:#333333;left:-637.5px;width:1500px;text-align:right;">10 000,00</div>
<div class="t" style="top:944.50px;height:19px;line-height:19px;font-size:12.9px;color:#333333;left:-523.5px;width:1500px;text-align:right;">1 000 000,00</div>
<div class="t" style="top:944.50px;height:19px;line-height:19px;font-size:12.9px;color:#333333;letter-spacing:-0.1px;left:990px;">без акциза</div>
<div class="t" style="top:944.50px;height:19px;line-height:19px;font-size:12.9px;color:#333333;left:1061px;">0%</div>
<div class="t" style="top:944.50px;height:19px;line-height:19px;font-size:12.9px;color:#333333;left:-296px;width:1500px;text-align:right;">0,00</div>
<div class="t" style="top:944.50px;height:19px;line-height:19px;font-size:12.9px;color:#333333;left:-191.5px;width:1500px;text-align:right;">1 000 000,00</div>
<div class="t" style="top:944.50px;height:19px;line-height:19px;font-size:12.9px;color:#333333;left:1316px;">--</div>
<div class="t" style="top:944.50px;height:19px;line-height:19px;font-size:12.9px;color:#333333;left:1392px;">--</div>
<div class="t" style="top:944.50px;height:19px;line-height:19px;font-size:12.9px;color:#333333;left:1466px;">--</div>
<div class="t" style="top:961.50px;height:21px;line-height:21px;font-size:14px;color:#222222;font-weight:bold;letter-spacing:0.231px;left:143.3px;">Всего к оплате</div>
<div class="t" style="top:963.50px;height:19px;line-height:19px;font-size:12.9px;color:#333333;left:-523.5px;width:1500px;text-align:right;">1 000 000,00</div>
<div class="t" style="top:962.00px;height:22px;line-height:22px;font-size:15px;color:#1a1a1a;left:303.5px;width:1500px;text-align:center;-webkit-text-stroke:0.4px #1a1a1a;">X</div>
<div class="t" style="top:963.50px;height:19px;line-height:19px;font-size:12.9px;color:#333333;left:-296px;width:1500px;text-align:right;">0,00</div>
<div class="t" style="top:963.50px;height:19px;line-height:19px;font-size:12.9px;color:#333333;left:-191.5px;width:1500px;text-align:right;">1 000 000,00</div>
<div class="t" style="left:144px;width:248px;top:1000.48px;line-height:15.84px;font-size:13px;color:#333333;text-align:left;letter-spacing:-0.085px;">Руководитель организации<br>или иное уполномоченное лицо</div>
<div class="t" style="top:1014.00px;height:20px;line-height:20px;font-size:13.5px;color:#333333;letter-spacing:-0.138px;left:545px;">Николаев В. А.</div>
<div class="t" style="left:746px;width:224px;top:1000.48px;line-height:15.84px;font-size:13px;color:#333333;text-align:left;letter-spacing:-0.085px;">Главный бухгалтер<br>или иное уполномоченное лицо</div>
<div class="t" style="top:1014.00px;height:20px;line-height:20px;font-size:13.5px;color:#333333;letter-spacing:-0.238px;left:1120px;">Антонова Е. Н.</div>
<div class="t" style="top:1031.50px;height:15px;line-height:15px;font-size:10.3px;color:#333333;letter-spacing:0.525px;left:-288px;width:1500px;text-align:center;">(подпись)</div>
<div class="t" style="top:1031.50px;height:15px;line-height:15px;font-size:10.3px;color:#333333;letter-spacing:0.343px;left:-108px;width:1500px;text-align:center;">(ф.и.о.)</div>
<div class="t" style="top:1031.50px;height:15px;line-height:15px;font-size:10.3px;color:#333333;letter-spacing:0.525px;left:285px;width:1500px;text-align:center;">(подпись)</div>
<div class="t" style="top:1031.50px;height:15px;line-height:15px;font-size:10.3px;color:#333333;letter-spacing:0.343px;left:462px;width:1500px;text-align:center;">(ф.и.о.)</div>
<div class="t" style="left:144px;width:248px;top:1067.58px;line-height:15.84px;font-size:13px;color:#333333;text-align:left;letter-spacing:-0.085px;">Индивидуальный предприниматель<br>или иное уполномоченное лицо</div>
<div class="t" style="top:1098.50px;height:15px;line-height:15px;font-size:10.3px;color:#333333;letter-spacing:0.525px;left:-288px;width:1500px;text-align:center;">(подпись)</div>
<div class="t" style="top:1098.50px;height:15px;line-height:15px;font-size:10.3px;color:#333333;letter-spacing:0.343px;left:-108px;width:1500px;text-align:center;">(ф.и.о.)</div>
<div class="t" style="left:814px;width:494px;top:1099.60px;line-height:13px;font-size:10.3px;color:#333333;text-align:center;letter-spacing:0.247px;">(реквизиты свидетельства о государственной<br>регистрации индивидуального предпринимателя)</div>
<div class="b" style="left:433px;top:823px;width:89px;height:151px;border:2px solid #f0903c;border-radius:24px;box-sizing:border-box;"></div>
<div class="b" style="left:1054px;top:824px;width:78px;height:150px;border:2px solid #f0903c;border-radius:24px;box-sizing:border-box;"></div>
</div></div>
<div class="b" style="left:1584px;top:529px;width:14px;height:602px;background:#ffffff;"></div>
<div class="b" style="left:1587px;top:552px;width:9px;height:556px;background:#d4d4d4;border-radius:5px;"></div>
<div class="b" style="left:1587px;top:552px;width:9px;height:462px;background:#999999;border-radius:5px;"></div>
<svg class="b" style="left:1587px;top:536px;" width="9" height="6" viewBox="0 0 9 6"><path d="M0.5 5.5 L4.5 0.5 L8.5 5.5 Z" fill="#c8c8c8"/></svg>
<svg class="b" style="left:1587px;top:1119px;" width="9" height="6" viewBox="0 0 9 6"><path d="M0.5 0.5 L4.5 5.5 L8.5 0.5 Z" fill="#606060"/></svg>
<div class="b" style="left:89px;top:1131px;width:1495px;height:14px;background:#ffffff;"></div>
<div class="b" style="left:112px;top:1135px;width:1449px;height:8px;background:#d4d4d4;border-radius:4px;"></div>
<div class="b" style="left:112px;top:1135px;width:1288px;height:8px;background:#999999;border-radius:4px;"></div>
<svg class="b" style="left:95px;top:1135px;" width="6" height="9" viewBox="0 0 6 9"><path d="M5.5 0.5 L0.5 4.5 L5.5 8.5 Z" fill="#c8c8c8"/></svg>
<svg class="b" style="left:1570px;top:1135px;" width="6" height="9" viewBox="0 0 6 9"><path d="M0.5 0.5 L5.5 4.5 L0.5 8.5 Z" fill="#606060"/></svg>
<div class="b" style="left:1584px;top:1131px;width:14px;height:14px;background:#ffffff;"></div>
</body></html>
